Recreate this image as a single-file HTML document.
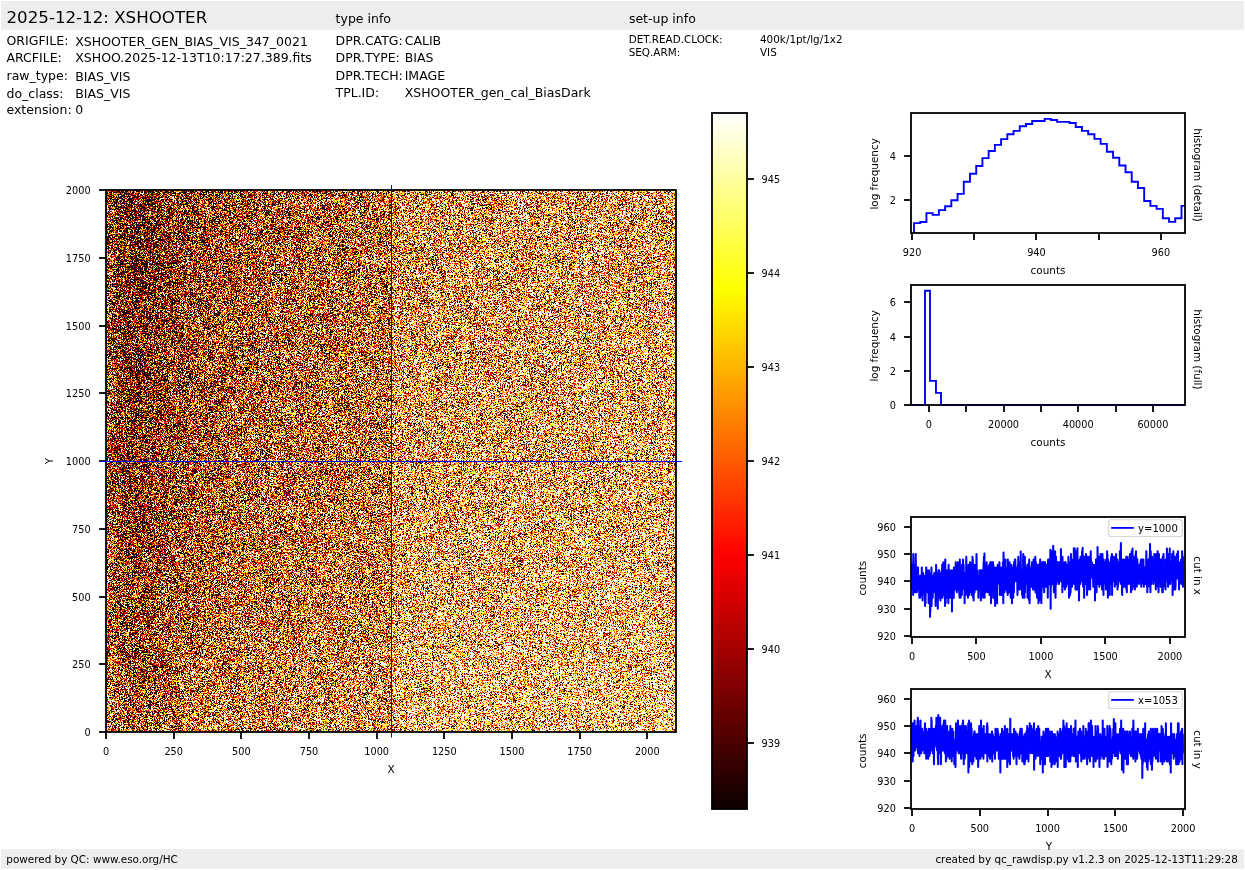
<!DOCTYPE html>
<html><head><meta charset="utf-8"><title>XSHOOTER BIAS_VIS raw display</title>
<style>html,body{margin:0;padding:0;background:#fff}svg{display:block;will-change:transform}text{white-space:pre}</style></head>
<body>
<svg width="1245" height="870" viewBox="0 0 1245 870" font-family="'DejaVu Sans','Liberation Sans',sans-serif" fill="#000">
<rect x="1" y="1" width="1243" height="28.7" fill="#ededed"/>
<rect x="1" y="849.1" width="1243" height="19.5" fill="#ededed"/>
<text x="6.5" y="23.2" font-size="16.67" text-anchor="start">2025-12-12: XSHOOTER</text>
<text x="335.6" y="22.6" font-size="12.5" text-anchor="start">type info</text>
<text x="628.9" y="22.6" font-size="12.5" text-anchor="start">set-up info</text>
<text x="6.5" y="44.5" font-size="12.5" text-anchor="start">ORIGFILE:</text>
<text x="75.3" y="45.7" font-size="12.5" text-anchor="start">XSHOOTER_GEN_BIAS_VIS_347_0021</text>
<text x="6.5" y="61.6" font-size="12.5" text-anchor="start">ARCFILE:</text>
<text x="75.3" y="61.9" font-size="12.5" text-anchor="start">XSHOO.2025-12-13T10:17:27.389.fits</text>
<text x="6.5" y="79.9" font-size="12.5" text-anchor="start">raw_type:</text>
<text x="75.3" y="80.5" font-size="12.5" text-anchor="start">BIAS_VIS</text>
<text x="6.5" y="97.5" font-size="12.5" text-anchor="start">do_class:</text>
<text x="75.3" y="97.5" font-size="12.5" text-anchor="start">BIAS_VIS</text>
<text x="6.5" y="113.6" font-size="12.5" text-anchor="start">extension:</text>
<text x="75.3" y="113.6" font-size="12.5" text-anchor="start">0</text>
<text x="335.5" y="44.8" font-size="12.5" text-anchor="start">DPR.CATG:</text>
<text x="404.7" y="44.8" font-size="12.5" text-anchor="start">CALIB</text>
<text x="335.5" y="61.7" font-size="12.5" text-anchor="start">DPR.TYPE:</text>
<text x="404.7" y="61.7" font-size="12.5" text-anchor="start">BIAS</text>
<text x="335.5" y="79.7" font-size="12.5" text-anchor="start">DPR.TECH:</text>
<text x="404.7" y="79.7" font-size="12.5" text-anchor="start">IMAGE</text>
<text x="335.5" y="97.2" font-size="12.5" text-anchor="start">TPL.ID:</text>
<text x="404.7" y="97.2" font-size="12.5" text-anchor="start">XSHOOTER_gen_cal_BiasDark</text>
<text x="628.7" y="42.6" font-size="10.42" text-anchor="start">DET.READ.CLOCK:</text>
<text x="760" y="42.6" font-size="10.42" text-anchor="start">400k/1pt/lg/1x2</text>
<text x="628.7" y="55.5" font-size="10.42" text-anchor="start">SEQ.ARM:</text>
<text x="760" y="55.5" font-size="10.42" text-anchor="start">VIS</text>
<text x="6.3" y="863.4" font-size="10.42" text-anchor="start">powered by QC: www.eso.org/HC</text>
<text x="1237.8" y="863.4" font-size="10.42" text-anchor="end">created by qc_rawdisp.py v1.2.3 on 2025-12-13T11:29:28</text>
<defs><linearGradient id="mu" x1="0" y1="0" x2="1" y2="0"><stop offset="0.00000" stop-color="rgb(112,0,0)"/><stop offset="0.42735" stop-color="rgb(115,0,0)"/><stop offset="0.49976" stop-color="rgb(117,0,0)"/><stop offset="0.50024" stop-color="rgb(153,0,0)"/><stop offset="0.71225" stop-color="rgb(161,0,0)"/><stop offset="1.00000" stop-color="rgb(168,0,0)"/></linearGradient>
<linearGradient id="band" x1="0" y1="0" x2="1" y2="0"><stop offset="0.0000" stop-color="#000" stop-opacity="0.202"/><stop offset="0.0095" stop-color="#000" stop-opacity="0.379"/><stop offset="0.0214" stop-color="#000" stop-opacity="0.632"/><stop offset="0.0380" stop-color="#000" stop-opacity="0.771"/><stop offset="0.0546" stop-color="#000" stop-opacity="0.784"/><stop offset="0.0760" stop-color="#000" stop-opacity="0.696"/><stop offset="0.1045" stop-color="#000" stop-opacity="0.546"/><stop offset="0.1425" stop-color="#000" stop-opacity="0.397"/><stop offset="0.1899" stop-color="#000" stop-opacity="0.274"/><stop offset="0.2469" stop-color="#000" stop-opacity="0.176"/><stop offset="0.3324" stop-color="#000" stop-opacity="0.094"/><stop offset="0.4274" stop-color="#000" stop-opacity="0.025"/><stop offset="0.4748" stop-color="#000" stop-opacity="0.000"/><stop offset="1.0000" stop-color="#000" stop-opacity="0.000"/></linearGradient>
<linearGradient id="bm" x1="0" y1="0" x2="0" y2="1"><stop offset="0" stop-color="#fff"/><stop offset="0.5" stop-color="#e6e6e6"/><stop offset="0.75" stop-color="#cccccc"/><stop offset="1" stop-color="#a6a6a6"/></linearGradient>
<mask id="bmask" maskUnits="userSpaceOnUse" x="0" y="0" width="1245" height="870"><rect x="105" y="190" width="572" height="542" fill="url(#bm)"/></mask>
<linearGradient id="muy" x1="0" y1="0" x2="0" y2="1"><stop offset="0.0000" stop-color="rgb(0,0,0)"/><stop offset="0.2500" stop-color="rgb(0,8,0)"/><stop offset="0.5000" stop-color="rgb(0,15,0)"/><stop offset="0.7500" stop-color="rgb(0,26,0)"/><stop offset="0.8750" stop-color="rgb(0,36,0)"/><stop offset="1.0000" stop-color="rgb(0,43,0)"/></linearGradient>
<clipPath id="imclip"><rect x="106" y="190" width="570" height="542"/></clipPath>
<filter id="nz" filterUnits="userSpaceOnUse" x="96" y="180" width="590" height="562" color-interpolation-filters="sRGB">
<feTurbulence type="fractalNoise" baseFrequency="2.7 3.3" numOctaves="1" seed="3" result="t0"/><feColorMatrix type="matrix" values="1 1 1 0 -1  1 1 1 0 -1  1 1 1 0 -1  0 0 0 0 1" in="t0" result="m0"/><feOffset in="m0" dx="0" dy="0" result="l0"/><feTurbulence type="fractalNoise" baseFrequency="2.7 3.3" numOctaves="1" seed="11" result="t1"/><feColorMatrix type="matrix" values="1 1 1 0 -1  1 1 1 0 -1  1 1 1 0 -1  0 0 0 0 1" in="t1" result="m1"/><feOffset in="m1" dx="5" dy="5" result="l1"/><feTurbulence type="fractalNoise" baseFrequency="2.7 3.3" numOctaves="1" seed="23" result="t2"/><feColorMatrix type="matrix" values="1 1 1 0 -1  1 1 1 0 -1  1 1 1 0 -1  0 0 0 0 1" in="t2" result="m2"/><feOffset in="m2" dx="5" dy="0" result="l2"/><feTurbulence type="fractalNoise" baseFrequency="2.7 3.3" numOctaves="1" seed="37" result="t3"/><feColorMatrix type="matrix" values="1 1 1 0 -1  1 1 1 0 -1  1 1 1 0 -1  0 0 0 0 1" in="t3" result="m3"/><feOffset in="m3" dx="0" dy="5" result="l3"/><feComposite in="l0" in2="l1" operator="arithmetic" k1="0" k2="0.5" k3="0.5" k4="0" result="ab"/><feComposite in="l2" in2="l3" operator="arithmetic" k1="0" k2="0.5" k3="0.5" k4="0" result="cd"/><feComposite in="ab" in2="cd" operator="arithmetic" k1="0" k2="1" k3="1" k4="-0.5" result="g"/><feColorMatrix in="SourceGraphic" type="matrix" values="1 1 0 0 0  1 1 0 0 0  1 1 0 0 0  0 0 0 0 1" result="mu"/><feComposite in="g" in2="mu" operator="arithmetic" k1="0" k2="2.73" k3="1" k4="-1.36" result="v"/><feComponentTransfer in="v"><feFuncR type="table" tableValues="0.042 0.062 0.083 0.103 0.124 0.145 0.165 0.186 0.206 0.227 0.247 0.268 0.289 0.309 0.330 0.350 0.371 0.392 0.412 0.433 0.453 0.474 0.495 0.515 0.536 0.556 0.577 0.598 0.618 0.639 0.659 0.680 0.700 0.721 0.742 0.762 0.783 0.803 0.824 0.845 0.865 0.886 0.906 0.927 0.948 0.968 0.989 1.000 1.000 1.000 1.000 1.000 1.000 1.000 1.000 1.000 1.000 1.000 1.000 1.000 1.000 1.000 1.000 1.000 1.000 1.000 1.000 1.000 1.000 1.000 1.000 1.000 1.000 1.000 1.000 1.000 1.000 1.000 1.000 1.000 1.000 1.000 1.000 1.000 1.000 1.000 1.000 1.000 1.000 1.000 1.000 1.000 1.000 1.000 1.000 1.000 1.000 1.000 1.000 1.000 1.000 1.000 1.000 1.000 1.000 1.000 1.000 1.000 1.000 1.000 1.000 1.000 1.000 1.000 1.000 1.000 1.000 1.000 1.000 1.000 1.000 1.000 1.000 1.000 1.000 1.000 1.000 1.000 1.000"/><feFuncG type="table" tableValues="0.000 0.000 0.000 0.000 0.000 0.000 0.000 0.000 0.000 0.000 0.000 0.000 0.000 0.000 0.000 0.000 0.000 0.000 0.000 0.000 0.000 0.000 0.000 0.000 0.000 0.000 0.000 0.000 0.000 0.000 0.000 0.000 0.000 0.000 0.000 0.000 0.000 0.000 0.000 0.000 0.000 0.000 0.000 0.000 0.000 0.000 0.000 0.009 0.030 0.050 0.071 0.092 0.112 0.133 0.153 0.174 0.195 0.215 0.236 0.256 0.277 0.298 0.318 0.339 0.359 0.380 0.400 0.421 0.442 0.462 0.483 0.503 0.524 0.545 0.565 0.586 0.606 0.627 0.648 0.668 0.689 0.709 0.730 0.750 0.771 0.792 0.812 0.833 0.853 0.874 0.895 0.915 0.936 0.956 0.977 0.998 1.000 1.000 1.000 1.000 1.000 1.000 1.000 1.000 1.000 1.000 1.000 1.000 1.000 1.000 1.000 1.000 1.000 1.000 1.000 1.000 1.000 1.000 1.000 1.000 1.000 1.000 1.000 1.000 1.000 1.000 1.000 1.000 1.000"/><feFuncB type="table" tableValues="0.000 0.000 0.000 0.000 0.000 0.000 0.000 0.000 0.000 0.000 0.000 0.000 0.000 0.000 0.000 0.000 0.000 0.000 0.000 0.000 0.000 0.000 0.000 0.000 0.000 0.000 0.000 0.000 0.000 0.000 0.000 0.000 0.000 0.000 0.000 0.000 0.000 0.000 0.000 0.000 0.000 0.000 0.000 0.000 0.000 0.000 0.000 0.000 0.000 0.000 0.000 0.000 0.000 0.000 0.000 0.000 0.000 0.000 0.000 0.000 0.000 0.000 0.000 0.000 0.000 0.000 0.000 0.000 0.000 0.000 0.000 0.000 0.000 0.000 0.000 0.000 0.000 0.000 0.000 0.000 0.000 0.000 0.000 0.000 0.000 0.000 0.000 0.000 0.000 0.000 0.000 0.000 0.000 0.000 0.000 0.000 0.027 0.058 0.089 0.120 0.151 0.182 0.212 0.243 0.274 0.305 0.336 0.367 0.398 0.429 0.460 0.490 0.521 0.552 0.583 0.614 0.645 0.676 0.707 0.737 0.768 0.799 0.830 0.861 0.892 0.923 0.954 0.985 1.000"/></feComponentTransfer></filter></defs>
<g filter="url(#nz)" clip-path="url(#imclip)"><rect x="106" y="190" width="570" height="542" fill="url(#mu)"/><rect x="106" y="190" width="570" height="542" fill="url(#band)" mask="url(#bmask)"/><rect x="106" y="190" width="570" height="542" fill="url(#muy)" style="mix-blend-mode:screen"/></g>
<rect x="106" y="190" width="570" height="542" fill="none" stroke="#000" stroke-width="1.8"/>
<line x1="106" y1="732" x2="106" y2="738.94" stroke="#000" stroke-width="1.8"/>
<text x="106" y="755" font-size="9.72" text-anchor="middle">0</text>
<line x1="106" y1="732" x2="99.06" y2="732" stroke="#000" stroke-width="1.8"/>
<text x="90.6" y="736" font-size="9.72" text-anchor="end">0</text>
<line x1="174" y1="732" x2="174" y2="738.94" stroke="#000" stroke-width="1.8"/>
<text x="173.66" y="755" font-size="9.72" text-anchor="middle">250</text>
<line x1="106" y1="664" x2="99.06" y2="664" stroke="#000" stroke-width="1.8"/>
<text x="90.6" y="668" font-size="9.72" text-anchor="end">250</text>
<line x1="241" y1="732" x2="241" y2="738.94" stroke="#000" stroke-width="1.8"/>
<text x="241.33" y="755" font-size="9.72" text-anchor="middle">500</text>
<line x1="106" y1="597" x2="99.06" y2="597" stroke="#000" stroke-width="1.8"/>
<text x="90.6" y="601" font-size="9.72" text-anchor="end">500</text>
<line x1="309" y1="732" x2="309" y2="738.94" stroke="#000" stroke-width="1.8"/>
<text x="308.99" y="755" font-size="9.72" text-anchor="middle">750</text>
<line x1="106" y1="529" x2="99.06" y2="529" stroke="#000" stroke-width="1.8"/>
<text x="90.6" y="533" font-size="9.72" text-anchor="end">750</text>
<line x1="377" y1="732" x2="377" y2="738.94" stroke="#000" stroke-width="1.8"/>
<text x="376.66" y="755" font-size="9.72" text-anchor="middle">1000</text>
<line x1="106" y1="461" x2="99.06" y2="461" stroke="#000" stroke-width="1.8"/>
<text x="90.6" y="465" font-size="9.72" text-anchor="end">1000</text>
<line x1="444" y1="732" x2="444" y2="738.94" stroke="#000" stroke-width="1.8"/>
<text x="444.32" y="755" font-size="9.72" text-anchor="middle">1250</text>
<line x1="106" y1="393" x2="99.06" y2="393" stroke="#000" stroke-width="1.8"/>
<text x="90.6" y="397" font-size="9.72" text-anchor="end">1250</text>
<line x1="512" y1="732" x2="512" y2="738.94" stroke="#000" stroke-width="1.8"/>
<text x="511.98" y="755" font-size="9.72" text-anchor="middle">1500</text>
<line x1="106" y1="326" x2="99.06" y2="326" stroke="#000" stroke-width="1.8"/>
<text x="90.6" y="330" font-size="9.72" text-anchor="end">1500</text>
<line x1="580" y1="732" x2="580" y2="738.94" stroke="#000" stroke-width="1.8"/>
<text x="579.65" y="755" font-size="9.72" text-anchor="middle">1750</text>
<line x1="106" y1="258" x2="99.06" y2="258" stroke="#000" stroke-width="1.8"/>
<text x="90.6" y="262" font-size="9.72" text-anchor="end">1750</text>
<line x1="647" y1="732" x2="647" y2="738.94" stroke="#000" stroke-width="1.8"/>
<text x="647.31" y="755" font-size="9.72" text-anchor="middle">2000</text>
<line x1="106" y1="190" x2="99.06" y2="190" stroke="#000" stroke-width="1.8"/>
<text x="90.6" y="194" font-size="9.72" text-anchor="end">2000</text>
<text x="391" y="773" font-size="10.42" text-anchor="middle">X</text>
<text x="52.9" y="461" font-size="10.42" text-anchor="middle" transform="rotate(-90 52.9 461)">Y</text>
<line x1="391.5" y1="185" x2="391.5" y2="737.5" stroke="#0000ff" stroke-width="1.0"/>
<line x1="100" y1="461.5" x2="682" y2="461.5" stroke="#0000ff" stroke-width="1.0"/>
<defs><linearGradient id="hot" x1="0" y1="1" x2="0" y2="0"><stop offset="0" stop-color="rgb(11,0,0)"/><stop offset="0.365079" stop-color="rgb(255,0,0)"/><stop offset="0.746032" stop-color="rgb(255,255,0)"/><stop offset="1" stop-color="rgb(255,255,255)"/></linearGradient></defs>
<rect x="712" y="113" width="35" height="696" fill="url(#hot)"/>
<rect x="712" y="113" width="35" height="696" fill="none" stroke="#000" stroke-width="1.8"/>
<line x1="747" y1="743" x2="753.94" y2="743" stroke="#000" stroke-width="1.8"/>
<text x="761.6" y="747" font-size="9.72" text-anchor="start">939</text>
<line x1="747" y1="649" x2="753.94" y2="649" stroke="#000" stroke-width="1.8"/>
<text x="761.6" y="653" font-size="9.72" text-anchor="start">940</text>
<line x1="747" y1="555" x2="753.94" y2="555" stroke="#000" stroke-width="1.8"/>
<text x="761.6" y="559" font-size="9.72" text-anchor="start">941</text>
<line x1="747" y1="461" x2="753.94" y2="461" stroke="#000" stroke-width="1.8"/>
<text x="761.6" y="465" font-size="9.72" text-anchor="start">942</text>
<line x1="747" y1="367" x2="753.94" y2="367" stroke="#000" stroke-width="1.8"/>
<text x="761.6" y="371" font-size="9.72" text-anchor="start">943</text>
<line x1="747" y1="273" x2="753.94" y2="273" stroke="#000" stroke-width="1.8"/>
<text x="761.6" y="277" font-size="9.72" text-anchor="start">944</text>
<line x1="747" y1="179" x2="753.94" y2="179" stroke="#000" stroke-width="1.8"/>
<text x="761.6" y="183" font-size="9.72" text-anchor="start">945</text>
<path d="M914 233 V223.1 H920.22 V222.05 H926.44 V213.1 H932.66 V214.9 H938.88 V210.1 H945.11 V206.2 H951.33 V200.2 H957.55 V193.9 H963.77 V181.7 H969.99 V173.8 H976.21 V166 H982.43 V158.1 H988.65 V151 H994.87 V144.9 H1001.09 V139.1 H1007.32 V134.2 H1013.54 V130.9 H1019.76 V126.2 H1025.98 V124 H1032.2 V121 H1038.42 V121 H1044.64 V118.9 H1050.86 V120 H1057.08 V121.9 H1063.3 V121.9 H1069.53 V122.95 H1075.75 V127 H1081.97 V130.9 H1088.19 V134.2 H1094.41 V138.9 H1100.63 V143.9 H1106.85 V151.8 H1113.07 V157.8 H1119.29 V165.5 H1125.51 V172.3 H1131.74 V181.7 H1137.96 V188 H1144.18 V201 H1150.4 V205.9 H1156.62 V208.9 H1162.84 V218.2 H1169.06 V221.9 H1175.28 V218.2 H1181.5 V205.9 H1185" fill="none" stroke="#0000ff" stroke-width="1.9" stroke-linejoin="miter"/>
<rect x="911" y="113" width="274" height="120" fill="none" stroke="#000" stroke-width="1.8"/>
<line x1="912" y1="233" x2="912" y2="239.94" stroke="#000" stroke-width="1.8"/>
<text x="912.05" y="256" font-size="9.72" text-anchor="middle">920</text>
<line x1="974" y1="233" x2="974" y2="239.94" stroke="#000" stroke-width="1.8"/>
<line x1="1036" y1="233" x2="1036" y2="239.94" stroke="#000" stroke-width="1.8"/>
<text x="1036.47" y="256" font-size="9.72" text-anchor="middle">940</text>
<line x1="1099" y1="233" x2="1099" y2="239.94" stroke="#000" stroke-width="1.8"/>
<line x1="1161" y1="233" x2="1161" y2="239.94" stroke="#000" stroke-width="1.8"/>
<text x="1160.89" y="256" font-size="9.72" text-anchor="middle">960</text>
<line x1="911" y1="200" x2="904.06" y2="200" stroke="#000" stroke-width="1.8"/>
<text x="895.9" y="204" font-size="9.72" text-anchor="end">2</text>
<line x1="911" y1="156" x2="904.06" y2="156" stroke="#000" stroke-width="1.8"/>
<text x="895.9" y="160" font-size="9.72" text-anchor="end">4</text>
<text x="1048" y="274" font-size="10.42" text-anchor="middle">counts</text>
<text x="877.7" y="173.85" font-size="10.42" text-anchor="middle" transform="rotate(-90 877.7 173.85)">log frequency</text>
<text x="1193.9" y="175.1" font-size="10.42" text-anchor="middle" transform="rotate(90 1193.9 175.1)">histogram (detail)</text>
<path d="M925 405 V290.8 H930 V380.9 H935.96 V392.9 H941 V405" fill="none" stroke="#0000ff" stroke-width="1.9"/>
<rect x="911" y="285" width="274" height="120" fill="none" stroke="#000" stroke-width="1.8"/>
<line x1="929" y1="405" x2="929" y2="411.94" stroke="#000" stroke-width="1.8"/>
<text x="928.9" y="428" font-size="9.72" text-anchor="middle">0</text>
<line x1="966" y1="405" x2="966" y2="411.94" stroke="#000" stroke-width="1.8"/>
<line x1="1004" y1="405" x2="1004" y2="411.94" stroke="#000" stroke-width="1.8"/>
<text x="1003.56" y="428" font-size="9.72" text-anchor="middle">20000</text>
<line x1="1041" y1="405" x2="1041" y2="411.94" stroke="#000" stroke-width="1.8"/>
<line x1="1078" y1="405" x2="1078" y2="411.94" stroke="#000" stroke-width="1.8"/>
<text x="1078.22" y="428" font-size="9.72" text-anchor="middle">40000</text>
<line x1="1116" y1="405" x2="1116" y2="411.94" stroke="#000" stroke-width="1.8"/>
<line x1="1153" y1="405" x2="1153" y2="411.94" stroke="#000" stroke-width="1.8"/>
<text x="1152.88" y="428" font-size="9.72" text-anchor="middle">60000</text>
<line x1="911" y1="405" x2="904.06" y2="405" stroke="#000" stroke-width="1.8"/>
<text x="895.9" y="409" font-size="9.72" text-anchor="end">0</text>
<line x1="911" y1="371" x2="904.06" y2="371" stroke="#000" stroke-width="1.8"/>
<text x="895.9" y="375" font-size="9.72" text-anchor="end">2</text>
<line x1="911" y1="337" x2="904.06" y2="337" stroke="#000" stroke-width="1.8"/>
<text x="895.9" y="341" font-size="9.72" text-anchor="end">4</text>
<line x1="911" y1="302" x2="904.06" y2="302" stroke="#000" stroke-width="1.8"/>
<text x="895.9" y="306" font-size="9.72" text-anchor="end">6</text>
<text x="1048" y="446" font-size="10.42" text-anchor="middle">counts</text>
<text x="877.7" y="345.85" font-size="10.42" text-anchor="middle" transform="rotate(-90 877.7 345.85)">log frequency</text>
<text x="1193.9" y="349.4" font-size="10.42" text-anchor="middle" transform="rotate(90 1193.9 349.4)">histogram (full)</text>
<line x1="911.7" y1="405" x2="924.1" y2="405" stroke="#000036" stroke-width="1.8"/>
<line x1="941.9" y1="405" x2="1184.3" y2="405" stroke="#000036" stroke-width="1.8"/>
<path d="M912 589.5 912.13 564.89 912.26 584.03 912.39 578.57 912.52 575.83 912.64 584.03 912.77 589.5 912.9 570.36 913.03 573.1 913.16 594.98 913.29 553.95 913.42 567.62 913.55 584.03 913.68 567.62 913.81 581.3 913.93 578.57 914.06 570.36 914.19 589.5 914.32 573.1 914.45 564.89 914.58 564.89 914.71 581.3 914.84 570.36 914.97 592.24 915.09 578.57 915.22 573.1 915.35 592.24 915.48 578.57 915.61 562.15 915.74 553.95 915.87 570.36 916 570.36 916.13 586.77 916.26 589.5 916.38 592.24 916.51 573.1 916.64 573.1 916.77 586.77 916.9 592.24 917.03 575.83 917.16 575.83 917.29 581.3 917.42 567.62 917.54 581.3 917.67 581.3 917.8 589.5 917.93 578.57 918.06 567.62 918.19 578.57 918.32 578.57 918.45 575.83 918.58 578.57 918.71 575.83 918.83 575.83 918.96 575.83 919.09 589.5 919.22 578.57 919.35 597.71 919.48 578.57 919.61 594.98 919.74 581.3 919.87 578.57 919.99 586.77 920.12 581.3 920.25 597.71 920.38 589.5 920.51 575.83 920.64 592.24 920.77 575.83 920.9 594.98 921.03 592.24 921.16 592.24 921.28 584.03 921.41 578.57 921.54 592.24 921.67 584.03 921.8 567.62 921.93 586.77 922.06 592.24 922.19 578.57 922.32 586.77 922.44 589.5 922.57 600.45 922.7 575.83 922.83 589.5 922.96 584.03 923.09 594.98 923.22 573.1 923.35 578.57 923.48 575.83 923.61 586.77 923.73 581.3 923.86 575.83 923.99 575.83 924.12 581.3 924.25 586.77 924.38 589.5 924.51 592.24 924.64 594.98 924.77 581.3 924.89 586.77 925.02 605.91 925.15 586.77 925.28 575.83 925.41 589.5 925.54 603.18 925.67 586.77 925.8 578.57 925.93 584.03 926.06 589.5 926.18 567.62 926.31 567.62 926.44 586.77 926.57 578.57 926.7 581.3 926.83 578.57 926.96 570.36 927.09 578.57 927.22 584.03 927.35 592.24 927.47 592.24 927.6 586.77 927.73 575.83 927.86 584.03 927.99 584.03 928.12 584.03 928.25 584.03 928.38 581.3 928.51 594.98 928.63 603.18 928.76 589.5 928.89 597.71 929.02 570.36 929.15 586.77 929.28 586.77 929.41 600.45 929.54 584.03 929.67 592.24 929.8 575.83 929.92 578.57 930.05 616.86 930.18 581.3 930.31 611.38 930.44 592.24 930.57 573.1 930.7 578.57 930.83 584.03 930.96 586.77 931.08 600.45 931.21 597.71 931.34 584.03 931.47 567.62 931.6 605.91 931.73 578.57 931.86 578.57 931.99 575.83 932.12 594.98 932.25 589.5 932.37 584.03 932.5 594.98 932.63 597.71 932.76 594.98 932.89 586.77 933.02 581.3 933.15 586.77 933.28 584.03 933.41 592.24 933.53 592.24 933.66 575.83 933.79 586.77 933.92 586.77 934.05 575.83 934.18 573.1 934.31 573.1 934.44 581.3 934.57 586.77 934.7 581.3 934.82 584.03 934.95 573.1 935.08 581.3 935.21 578.57 935.34 586.77 935.47 573.1 935.6 605.91 935.73 581.3 935.86 578.57 935.98 597.71 936.11 564.89 936.24 586.77 936.37 586.77 936.5 594.98 936.63 575.83 936.76 584.03 936.89 592.24 937.02 584.03 937.15 578.57 937.27 573.1 937.4 584.03 937.53 594.98 937.66 589.5 937.79 608.65 937.92 592.24 938.05 578.57 938.18 581.3 938.31 586.77 938.43 589.5 938.56 570.36 938.69 581.3 938.82 575.83 938.95 581.3 939.08 592.24 939.21 570.36 939.34 597.71 939.47 597.71 939.6 589.5 939.72 592.24 939.85 589.5 939.98 592.24 940.11 575.83 940.24 584.03 940.37 581.3 940.5 600.45 940.63 592.24 940.76 575.83 940.88 597.71 941.01 573.1 941.14 594.98 941.27 581.3 941.4 592.24 941.53 584.03 941.66 594.98 941.79 586.77 941.92 570.36 942.05 589.5 942.17 564.89 942.3 589.5 942.43 597.71 942.56 584.03 942.69 589.5 942.82 567.62 942.95 575.83 943.08 573.1 943.21 578.57 943.33 562.15 943.46 578.57 943.59 581.3 943.72 592.24 943.85 594.98 943.98 584.03 944.11 575.83 944.24 573.1 944.37 594.98 944.5 578.57 944.62 584.03 944.75 594.98 944.88 578.57 945.01 605.91 945.14 581.3 945.27 559.42 945.4 594.98 945.53 584.03 945.66 603.18 945.78 592.24 945.91 575.83 946.04 594.98 946.17 584.03 946.3 586.77 946.43 586.77 946.56 581.3 946.69 578.57 946.82 573.1 946.95 575.83 947.07 589.5 947.2 570.36 947.33 570.36 947.46 597.71 947.59 575.83 947.72 575.83 947.85 573.1 947.98 578.57 948.11 594.98 948.23 586.77 948.36 603.18 948.49 584.03 948.62 564.89 948.75 575.83 948.88 575.83 949.01 586.77 949.14 592.24 949.27 592.24 949.4 581.3 949.52 589.5 949.65 589.5 949.78 570.36 949.91 597.71 950.04 594.98 950.17 586.77 950.3 584.03 950.43 584.03 950.56 594.98 950.68 581.3 950.81 584.03 950.94 578.57 951.07 592.24 951.2 578.57 951.33 581.3 951.46 589.5 951.59 584.03 951.72 586.77 951.85 570.36 951.97 611.38 952.1 594.98 952.23 597.71 952.36 586.77 952.49 589.5 952.62 586.77 952.75 575.83 952.88 597.71 953.01 589.5 953.14 584.03 953.26 592.24 953.39 578.57 953.52 578.57 953.65 589.5 953.78 597.71 953.91 567.62 954.04 578.57 954.17 578.57 954.3 581.3 954.42 581.3 954.55 573.1 954.68 581.3 954.81 586.77 954.94 575.83 955.07 581.3 955.2 589.5 955.33 589.5 955.46 570.36 955.59 575.83 955.71 562.15 955.84 586.77 955.97 589.5 956.1 578.57 956.23 567.62 956.36 575.83 956.49 578.57 956.62 564.89 956.75 589.5 956.87 592.24 957 589.5 957.13 584.03 957.26 578.57 957.39 573.1 957.52 578.57 957.65 567.62 957.78 589.5 957.91 562.15 958.04 589.5 958.16 570.36 958.29 589.5 958.42 578.57 958.55 581.3 958.68 575.83 958.81 573.1 958.94 584.03 959.07 581.3 959.2 578.57 959.32 594.98 959.45 589.5 959.58 597.71 959.71 581.3 959.84 559.42 959.97 573.1 960.1 589.5 960.23 586.77 960.36 573.1 960.49 586.77 960.61 597.71 960.74 592.24 960.87 592.24 961 592.24 961.13 575.83 961.26 581.3 961.39 594.98 961.52 586.77 961.65 592.24 961.77 592.24 961.9 594.98 962.03 564.89 962.16 584.03 962.29 575.83 962.42 573.1 962.55 584.03 962.68 575.83 962.81 575.83 962.94 578.57 963.06 559.42 963.19 578.57 963.32 584.03 963.45 575.83 963.58 564.89 963.71 570.36 963.84 586.77 963.97 589.5 964.1 589.5 964.22 586.77 964.35 578.57 964.48 573.1 964.61 603.18 964.74 581.3 964.87 592.24 965 573.1 965.13 573.1 965.26 589.5 965.39 584.03 965.51 589.5 965.64 575.83 965.77 594.98 965.9 592.24 966.03 586.77 966.16 570.36 966.29 556.68 966.42 581.3 966.55 592.24 966.67 581.3 966.8 589.5 966.93 575.83 967.06 592.24 967.19 584.03 967.32 581.3 967.45 575.83 967.58 581.3 967.71 567.62 967.84 578.57 967.96 597.71 968.09 573.1 968.22 584.03 968.35 586.77 968.48 564.89 968.61 589.5 968.74 578.57 968.87 586.77 969 567.62 969.12 584.03 969.25 578.57 969.38 594.98 969.51 567.62 969.64 589.5 969.77 573.1 969.9 570.36 970.03 567.62 970.16 562.15 970.29 592.24 970.41 575.83 970.54 578.57 970.67 575.83 970.8 570.36 970.93 578.57 971.06 589.5 971.19 581.3 971.32 564.89 971.45 592.24 971.57 578.57 971.7 589.5 971.83 570.36 971.96 594.98 972.09 584.03 972.22 581.3 972.35 578.57 972.48 556.68 972.61 564.89 972.74 589.5 972.86 559.42 972.99 592.24 973.12 597.71 973.25 594.98 973.38 578.57 973.51 575.83 973.64 600.45 973.77 575.83 973.9 584.03 974.02 573.1 974.15 584.03 974.28 570.36 974.41 575.83 974.54 592.24 974.67 564.89 974.8 578.57 974.93 573.1 975.06 567.62 975.19 589.5 975.31 581.3 975.44 586.77 975.57 589.5 975.7 578.57 975.83 575.83 975.96 567.62 976.09 567.62 976.22 581.3 976.35 586.77 976.48 553.95 976.6 559.42 976.73 581.3 976.86 589.5 976.99 584.03 977.12 578.57 977.25 570.36 977.38 570.36 977.51 575.83 977.64 581.3 977.76 578.57 977.89 584.03 978.02 578.57 978.15 581.3 978.28 575.83 978.41 597.71 978.54 584.03 978.67 581.3 978.8 589.5 978.93 581.3 979.05 589.5 979.18 586.77 979.31 581.3 979.44 581.3 979.57 584.03 979.7 570.36 979.83 578.57 979.96 575.83 980.09 578.57 980.21 586.77 980.34 589.5 980.47 570.36 980.6 584.03 980.73 597.71 980.86 600.45 980.99 578.57 981.12 586.77 981.25 581.3 981.38 584.03 981.5 584.03 981.63 581.3 981.76 592.24 981.89 578.57 982.02 570.36 982.15 573.1 982.28 594.98 982.41 592.24 982.54 592.24 982.66 581.3 982.79 570.36 982.92 575.83 983.05 597.71 983.18 578.57 983.31 573.1 983.44 584.03 983.57 562.15 983.7 586.77 983.83 567.62 983.95 556.68 984.08 592.24 984.21 581.3 984.34 573.1 984.47 553.53 984.6 597.71 984.73 573.1 984.86 575.83 984.99 584.03 985.11 586.77 985.24 584.03 985.37 581.3 985.5 592.24 985.63 564.89 985.76 589.5 985.89 584.03 986.02 586.77 986.15 584.03 986.28 578.57 986.4 586.77 986.53 581.3 986.66 562.15 986.79 570.36 986.92 581.3 987.05 570.36 987.18 586.77 987.31 575.83 987.44 592.24 987.56 589.5 987.69 586.77 987.82 567.62 987.95 575.83 988.08 573.1 988.21 578.57 988.34 575.83 988.47 575.83 988.6 573.1 988.73 578.57 988.85 586.77 988.98 586.77 989.11 567.62 989.24 564.89 989.37 573.1 989.5 594.98 989.63 564.89 989.76 575.83 989.89 581.3 990.01 578.57 990.14 584.03 990.27 562.15 990.4 562.15 990.53 589.5 990.66 581.3 990.79 575.83 990.92 567.62 991.05 603.18 991.18 570.36 991.3 562.15 991.43 581.3 991.56 578.57 991.69 567.62 991.82 575.83 991.95 592.24 992.08 589.5 992.21 589.5 992.34 592.24 992.46 578.57 992.59 584.03 992.72 578.57 992.85 573.1 992.98 562.15 993.11 575.83 993.24 597.71 993.37 564.89 993.5 581.3 993.63 567.62 993.75 584.03 993.88 575.83 994.01 581.3 994.14 578.57 994.27 567.62 994.4 586.77 994.53 578.57 994.66 575.83 994.79 584.03 994.91 600.45 995.04 575.83 995.17 605.91 995.3 592.24 995.43 584.03 995.56 575.83 995.69 570.36 995.82 570.36 995.95 573.1 996.08 581.3 996.2 567.62 996.33 581.3 996.46 567.62 996.59 600.45 996.72 589.5 996.85 584.03 996.98 578.57 997.11 603.18 997.24 570.36 997.36 570.36 997.49 570.36 997.62 584.03 997.75 564.89 997.88 584.03 998.01 570.36 998.14 578.57 998.27 578.57 998.4 581.3 998.53 578.57 998.65 567.62 998.78 564.89 998.91 564.89 999.04 570.36 999.17 573.1 999.3 575.83 999.43 562.15 999.56 584.03 999.69 584.03 999.81 578.57 999.94 594.98 1000.07 581.3 1000.2 578.57 1000.33 589.5 1000.46 584.03 1000.59 573.1 1000.72 581.3 1000.85 578.57 1000.98 567.62 1001.1 584.03 1001.23 589.5 1001.36 578.57 1001.49 575.83 1001.62 594.98 1001.75 573.1 1001.88 581.3 1002.01 584.03 1002.14 586.77 1002.26 581.3 1002.39 570.36 1002.52 573.1 1002.65 570.36 1002.78 581.3 1002.91 562.15 1003.04 567.62 1003.17 578.57 1003.3 603.18 1003.43 578.57 1003.55 552.51 1003.68 578.57 1003.81 589.5 1003.94 562.15 1004.07 584.03 1004.2 573.1 1004.33 570.36 1004.46 592.24 1004.59 578.57 1004.72 567.62 1004.84 581.3 1004.97 573.1 1005.1 578.57 1005.23 567.62 1005.36 559.42 1005.49 589.5 1005.62 581.3 1005.75 575.83 1005.88 584.03 1006 586.77 1006.13 581.3 1006.26 581.3 1006.39 584.03 1006.52 575.83 1006.65 570.36 1006.78 570.36 1006.91 573.1 1007.04 567.62 1007.17 592.24 1007.29 578.57 1007.42 575.83 1007.55 573.1 1007.68 594.98 1007.81 559.42 1007.94 586.77 1008.07 575.83 1008.2 570.36 1008.33 567.62 1008.45 584.03 1008.58 584.03 1008.71 575.83 1008.84 573.1 1008.97 570.36 1009.1 578.57 1009.23 584.03 1009.36 592.24 1009.49 562.15 1009.62 592.24 1009.74 570.36 1009.87 575.83 1010 570.36 1010.13 567.62 1010.26 564.89 1010.39 578.57 1010.52 573.1 1010.65 597.71 1010.78 578.57 1010.9 586.77 1011.03 578.57 1011.16 564.89 1011.29 575.83 1011.42 567.62 1011.55 581.3 1011.68 573.1 1011.81 581.3 1011.94 603.18 1012.07 584.03 1012.19 581.3 1012.32 575.83 1012.45 578.57 1012.58 578.57 1012.71 567.62 1012.84 573.1 1012.97 581.3 1013.1 570.36 1013.23 597.71 1013.35 581.3 1013.48 578.57 1013.61 564.89 1013.74 584.03 1013.87 592.24 1014 575.83 1014.13 562.15 1014.26 578.57 1014.39 578.57 1014.52 578.57 1014.64 578.57 1014.77 564.89 1014.9 559.42 1015.03 573.1 1015.16 578.57 1015.29 559.42 1015.42 575.83 1015.55 575.83 1015.68 581.3 1015.8 581.3 1015.93 575.83 1016.06 581.3 1016.19 573.1 1016.32 575.83 1016.45 573.1 1016.58 581.3 1016.71 578.57 1016.84 575.83 1016.97 575.83 1017.09 575.83 1017.22 567.62 1017.35 586.77 1017.48 594.98 1017.61 570.36 1017.74 578.57 1017.87 564.89 1018 578.57 1018.13 589.5 1018.25 556.68 1018.38 573.1 1018.51 581.3 1018.64 584.03 1018.77 573.1 1018.9 584.03 1019.03 573.1 1019.16 567.62 1019.29 589.5 1019.42 581.3 1019.54 573.1 1019.67 562.15 1019.8 567.62 1019.93 581.3 1020.06 562.15 1020.19 581.3 1020.32 578.57 1020.45 573.1 1020.58 586.77 1020.7 551.6 1020.83 564.89 1020.96 575.83 1021.09 584.03 1021.22 589.5 1021.35 573.1 1021.48 570.36 1021.61 581.3 1021.74 578.57 1021.87 573.1 1021.99 578.57 1022.12 594.98 1022.25 570.36 1022.38 575.83 1022.51 570.36 1022.64 584.03 1022.77 597.71 1022.9 589.5 1023.03 575.83 1023.15 556.68 1023.28 553.95 1023.41 575.83 1023.54 592.24 1023.67 581.3 1023.8 573.1 1023.93 573.1 1024.06 575.83 1024.19 564.89 1024.32 586.77 1024.44 597.71 1024.57 586.77 1024.7 589.5 1024.83 556.68 1024.96 578.57 1025.09 592.24 1025.22 570.36 1025.35 567.62 1025.48 575.83 1025.6 575.83 1025.73 567.62 1025.86 573.1 1025.99 584.03 1026.12 570.36 1026.25 567.62 1026.38 573.1 1026.51 567.62 1026.64 570.36 1026.77 578.57 1026.89 578.57 1027.02 570.36 1027.15 581.3 1027.28 564.89 1027.41 564.89 1027.54 597.71 1027.67 578.57 1027.8 584.03 1027.93 584.03 1028.06 575.83 1028.18 578.57 1028.31 573.1 1028.44 573.1 1028.57 573.1 1028.7 584.03 1028.83 581.3 1028.96 562.15 1029.09 600.45 1029.22 559.42 1029.34 581.3 1029.47 564.89 1029.6 603.18 1029.73 581.3 1029.86 567.62 1029.99 575.83 1030.12 567.62 1030.25 586.77 1030.38 581.3 1030.51 584.03 1030.63 573.1 1030.76 573.1 1030.89 578.57 1031.02 578.57 1031.15 578.57 1031.28 575.83 1031.41 586.77 1031.54 578.57 1031.67 578.57 1031.79 581.3 1031.92 581.3 1032.05 562.15 1032.18 584.03 1032.31 573.1 1032.44 564.89 1032.57 570.36 1032.7 575.83 1032.83 567.62 1032.96 589.5 1033.08 589.5 1033.21 581.3 1033.34 578.57 1033.47 578.57 1033.6 559.42 1033.73 559.42 1033.86 575.83 1033.99 573.1 1034.12 586.77 1034.24 573.1 1034.37 589.5 1034.5 562.15 1034.63 581.3 1034.76 570.36 1034.89 589.5 1035.02 562.15 1035.15 570.36 1035.28 556.68 1035.41 575.83 1035.53 592.24 1035.66 584.03 1035.79 589.5 1035.92 562.15 1036.05 581.3 1036.18 584.03 1036.31 570.36 1036.44 573.1 1036.57 573.1 1036.69 581.3 1036.82 594.98 1036.95 589.5 1037.08 597.71 1037.21 564.89 1037.34 567.62 1037.47 581.3 1037.6 570.36 1037.73 570.36 1037.86 570.36 1037.98 570.36 1038.11 567.62 1038.24 575.83 1038.37 597.71 1038.5 603.18 1038.63 564.89 1038.76 570.36 1038.89 600.45 1039.02 575.83 1039.14 584.03 1039.27 581.3 1039.4 600.45 1039.53 567.62 1039.66 575.83 1039.79 567.62 1039.92 564.89 1040.05 564.89 1040.18 559.42 1040.31 573.1 1040.43 573.1 1040.56 581.3 1040.69 570.36 1040.82 578.57 1040.95 586.77 1041.08 564.89 1041.21 570.36 1041.34 603.18 1041.47 594.98 1041.59 578.57 1041.72 589.5 1041.85 564.89 1041.98 573.1 1042.11 570.36 1042.24 567.62 1042.37 562.15 1042.5 578.57 1042.63 570.36 1042.76 573.1 1042.88 567.62 1043.01 570.36 1043.14 562.15 1043.27 570.36 1043.4 581.3 1043.53 575.83 1043.66 586.77 1043.79 573.1 1043.92 562.15 1044.04 581.3 1044.17 592.24 1044.3 575.83 1044.43 581.3 1044.56 575.83 1044.69 581.3 1044.82 575.83 1044.95 586.77 1045.08 562.15 1045.21 578.57 1045.33 570.36 1045.46 567.62 1045.59 578.57 1045.72 570.36 1045.85 578.57 1045.98 581.3 1046.11 578.57 1046.24 570.36 1046.37 586.77 1046.49 584.03 1046.62 584.03 1046.75 581.3 1046.88 564.89 1047.01 575.83 1047.14 578.57 1047.27 573.1 1047.4 564.89 1047.53 584.03 1047.66 564.89 1047.78 597.71 1047.91 584.03 1048.04 562.15 1048.17 559.42 1048.3 573.1 1048.43 578.57 1048.56 567.62 1048.69 578.57 1048.82 559.42 1048.94 564.89 1049.07 567.62 1049.2 584.03 1049.33 564.89 1049.46 578.57 1049.59 578.57 1049.72 578.57 1049.85 575.83 1049.98 570.36 1050.11 567.62 1050.23 567.62 1050.36 549.68 1050.49 578.57 1050.62 608.65 1050.75 581.3 1050.88 575.83 1051.01 586.77 1051.14 562.15 1051.27 573.1 1051.39 573.1 1051.52 575.83 1051.65 564.89 1051.78 578.57 1051.91 570.36 1052.04 551.22 1052.17 575.83 1052.3 581.3 1052.43 584.03 1052.56 567.62 1052.68 573.1 1052.81 581.3 1052.94 584.03 1053.07 573.1 1053.2 545.75 1053.33 553.95 1053.46 575.83 1053.59 575.83 1053.72 575.83 1053.85 592.24 1053.97 589.5 1054.1 578.57 1054.23 575.83 1054.36 586.77 1054.49 559.42 1054.62 570.36 1054.75 562.15 1054.88 562.15 1055.01 575.83 1055.13 551.22 1055.26 573.1 1055.39 592.24 1055.52 597.71 1055.65 575.83 1055.78 564.89 1055.91 573.1 1056.04 556.68 1056.17 578.57 1056.3 570.36 1056.42 567.62 1056.55 584.03 1056.68 570.36 1056.81 570.36 1056.94 564.89 1057.07 562.15 1057.2 564.89 1057.33 581.3 1057.46 567.62 1057.58 564.89 1057.71 573.1 1057.84 567.62 1057.97 567.62 1058.1 562.15 1058.23 573.1 1058.36 570.36 1058.49 573.1 1058.62 573.1 1058.75 581.3 1058.87 578.57 1059 584.03 1059.13 575.83 1059.26 567.62 1059.39 567.62 1059.52 567.62 1059.65 575.83 1059.78 562.15 1059.91 578.57 1060.03 567.62 1060.16 570.36 1060.29 581.3 1060.42 581.3 1060.55 567.62 1060.68 573.1 1060.81 573.1 1060.94 549.08 1061.07 567.62 1061.2 573.1 1061.32 567.62 1061.45 581.3 1061.58 575.83 1061.71 570.36 1061.84 581.3 1061.97 575.83 1062.1 575.83 1062.23 573.1 1062.36 592.24 1062.48 556.68 1062.61 575.83 1062.74 567.62 1062.87 584.03 1063 586.77 1063.13 573.1 1063.26 578.57 1063.39 567.62 1063.52 584.03 1063.65 584.03 1063.77 570.36 1063.9 567.62 1064.03 564.89 1064.16 573.1 1064.29 570.36 1064.42 581.3 1064.55 562.15 1064.68 562.15 1064.81 562.15 1064.93 589.5 1065.06 564.89 1065.19 581.3 1065.32 570.36 1065.45 570.36 1065.58 562.15 1065.71 575.83 1065.84 578.57 1065.97 584.03 1066.1 586.77 1066.22 567.62 1066.35 584.03 1066.48 567.62 1066.61 578.57 1066.74 578.57 1066.87 564.89 1067 564.89 1067.13 584.03 1067.26 575.83 1067.38 573.1 1067.51 567.62 1067.64 581.3 1067.77 578.57 1067.9 575.83 1068.03 567.62 1068.16 564.89 1068.29 578.57 1068.42 556.68 1068.55 570.36 1068.67 581.3 1068.8 589.5 1068.93 578.57 1069.06 597.71 1069.19 573.1 1069.32 567.62 1069.45 562.15 1069.58 570.36 1069.71 589.5 1069.83 575.83 1069.96 567.62 1070.09 594.98 1070.22 581.3 1070.35 567.62 1070.48 573.1 1070.61 592.24 1070.74 578.57 1070.87 573.1 1071 553.95 1071.12 578.57 1071.25 584.03 1071.38 570.36 1071.51 570.36 1071.64 567.62 1071.77 559.42 1071.9 575.83 1072.03 586.77 1072.16 573.1 1072.28 573.1 1072.41 564.89 1072.54 564.89 1072.67 581.3 1072.8 567.62 1072.93 564.89 1073.06 575.83 1073.19 564.89 1073.32 573.1 1073.45 573.1 1073.57 575.83 1073.7 564.89 1073.83 548.35 1073.96 570.36 1074.09 584.03 1074.22 575.83 1074.35 578.57 1074.48 570.36 1074.61 575.83 1074.73 548.48 1074.86 567.62 1074.99 556.68 1075.12 581.3 1075.25 575.83 1075.38 553.95 1075.51 589.5 1075.64 573.1 1075.77 589.5 1075.9 559.42 1076.02 586.77 1076.15 575.83 1076.28 575.83 1076.41 589.5 1076.54 551.22 1076.67 575.83 1076.8 556.68 1076.93 581.3 1077.06 586.77 1077.18 570.36 1077.31 573.1 1077.44 548.15 1077.57 584.03 1077.7 589.5 1077.83 581.3 1077.96 570.36 1078.09 567.62 1078.22 581.3 1078.35 575.83 1078.47 567.62 1078.6 562.15 1078.73 578.57 1078.86 573.1 1078.99 600.45 1079.12 584.03 1079.25 570.36 1079.38 573.1 1079.51 575.83 1079.63 559.42 1079.76 575.83 1079.89 584.03 1080.02 570.36 1080.15 570.36 1080.28 584.03 1080.41 564.89 1080.54 556.68 1080.67 578.57 1080.8 581.3 1080.92 573.1 1081.05 562.15 1081.18 578.57 1081.31 581.3 1081.44 578.57 1081.57 570.36 1081.7 570.36 1081.83 575.83 1081.96 562.15 1082.09 551.22 1082.21 578.57 1082.34 562.15 1082.47 570.36 1082.6 547.86 1082.73 581.3 1082.86 575.83 1082.99 573.1 1083.12 586.77 1083.25 575.83 1083.37 567.62 1083.5 586.77 1083.63 573.1 1083.76 556.68 1083.89 578.57 1084.02 581.3 1084.15 597.71 1084.28 573.1 1084.41 589.5 1084.54 567.62 1084.66 556.68 1084.79 567.62 1084.92 581.3 1085.05 567.62 1085.18 578.57 1085.31 584.03 1085.44 578.57 1085.57 570.36 1085.7 575.83 1085.82 567.62 1085.95 553.95 1086.08 567.62 1086.21 564.89 1086.34 578.57 1086.47 559.42 1086.6 570.36 1086.73 564.89 1086.86 581.3 1086.99 570.36 1087.11 594.98 1087.24 575.83 1087.37 581.3 1087.5 584.03 1087.63 556.68 1087.76 586.77 1087.89 575.83 1088.02 575.83 1088.15 567.62 1088.27 564.89 1088.4 589.5 1088.53 578.57 1088.66 581.3 1088.79 567.62 1088.92 564.89 1089.05 575.83 1089.18 578.57 1089.31 584.03 1089.44 570.36 1089.56 556.68 1089.69 570.36 1089.82 581.3 1089.95 581.3 1090.08 581.3 1090.21 589.5 1090.34 556.68 1090.47 573.1 1090.6 575.83 1090.72 551.22 1090.85 570.36 1090.98 559.42 1091.11 570.36 1091.24 562.15 1091.37 573.1 1091.5 575.83 1091.63 570.36 1091.76 567.62 1091.89 562.15 1092.01 570.36 1092.14 575.83 1092.27 575.83 1092.4 570.36 1092.53 578.57 1092.66 575.83 1092.79 567.62 1092.92 567.62 1093.05 567.62 1093.17 581.3 1093.3 586.77 1093.43 570.36 1093.56 573.1 1093.69 575.83 1093.82 570.36 1093.95 564.89 1094.08 575.83 1094.21 570.36 1094.34 581.3 1094.46 575.83 1094.59 581.3 1094.72 586.77 1094.85 567.62 1094.98 600.45 1095.11 573.1 1095.24 564.89 1095.37 570.36 1095.5 586.77 1095.62 570.36 1095.75 589.5 1095.88 581.3 1096.01 559.42 1096.14 570.36 1096.27 562.15 1096.4 584.03 1096.53 592.24 1096.66 581.3 1096.79 559.42 1096.91 564.89 1097.04 562.15 1097.17 573.1 1097.3 573.1 1097.43 575.83 1097.56 547.01 1097.69 573.1 1097.82 556.68 1097.95 575.83 1098.07 559.42 1098.2 584.03 1098.33 578.57 1098.46 570.36 1098.59 578.57 1098.72 575.83 1098.85 573.1 1098.98 578.57 1099.11 556.68 1099.24 562.15 1099.36 586.77 1099.49 556.68 1099.62 573.1 1099.75 573.1 1099.88 573.1 1100.01 564.89 1100.14 564.89 1100.27 578.57 1100.4 573.1 1100.52 584.03 1100.65 553.95 1100.78 581.3 1100.91 581.3 1101.04 578.57 1101.17 570.36 1101.3 564.89 1101.43 575.83 1101.56 573.1 1101.69 575.83 1101.81 559.42 1101.94 570.36 1102.07 589.5 1102.2 559.42 1102.33 570.36 1102.46 553.95 1102.59 578.57 1102.72 575.83 1102.85 573.1 1102.97 586.77 1103.1 575.83 1103.23 559.42 1103.36 564.89 1103.49 594.98 1103.62 559.42 1103.75 567.62 1103.88 564.89 1104.01 573.1 1104.14 570.36 1104.26 570.36 1104.39 573.1 1104.52 581.3 1104.65 562.15 1104.78 570.36 1104.91 567.62 1105.04 567.62 1105.17 575.83 1105.3 573.1 1105.42 584.03 1105.55 570.36 1105.68 570.36 1105.81 575.83 1105.94 589.5 1106.07 559.42 1106.2 573.1 1106.33 573.1 1106.46 575.83 1106.59 578.57 1106.71 575.83 1106.84 584.03 1106.97 578.57 1107.1 551.22 1107.23 559.42 1107.36 553.95 1107.49 578.57 1107.62 589.5 1107.75 584.03 1107.88 597.71 1108 562.15 1108.13 559.42 1108.26 570.36 1108.39 567.62 1108.52 567.62 1108.65 573.1 1108.78 564.89 1108.91 581.3 1109.04 575.83 1109.16 573.1 1109.29 589.5 1109.42 581.3 1109.55 567.62 1109.68 567.62 1109.81 594.98 1109.94 562.15 1110.07 567.62 1110.2 564.89 1110.33 573.1 1110.45 567.62 1110.58 584.03 1110.71 573.1 1110.84 581.3 1110.97 575.83 1111.1 559.42 1111.23 556.68 1111.36 570.36 1111.49 575.83 1111.61 564.89 1111.74 567.62 1111.87 553.95 1112 564.89 1112.13 594.98 1112.26 570.36 1112.39 575.83 1112.52 578.57 1112.65 570.36 1112.78 570.36 1112.9 575.83 1113.03 556.68 1113.16 567.62 1113.29 567.62 1113.42 570.36 1113.55 559.42 1113.68 581.3 1113.81 559.42 1113.94 573.1 1114.06 556.68 1114.19 559.42 1114.32 567.62 1114.45 575.83 1114.58 567.62 1114.71 567.62 1114.84 586.77 1114.97 575.83 1115.1 578.57 1115.23 559.42 1115.35 556.68 1115.48 578.57 1115.61 575.83 1115.74 584.03 1115.87 570.36 1116 564.89 1116.13 553.95 1116.26 584.03 1116.39 562.15 1116.51 573.1 1116.64 578.57 1116.77 575.83 1116.9 578.57 1117.03 567.62 1117.16 570.36 1117.29 559.42 1117.42 575.83 1117.55 589.5 1117.68 581.3 1117.8 567.62 1117.93 586.77 1118.06 578.57 1118.19 567.62 1118.32 584.03 1118.45 562.15 1118.58 567.62 1118.71 575.83 1118.84 573.1 1118.96 575.83 1119.09 575.83 1119.22 575.83 1119.35 570.36 1119.48 573.1 1119.61 578.57 1119.74 581.3 1119.87 551.22 1120 581.3 1120.13 573.1 1120.25 559.42 1120.38 562.15 1120.51 578.57 1120.64 551.22 1120.77 553.95 1120.9 543.01 1121.03 584.03 1121.16 564.89 1121.29 573.1 1121.41 573.1 1121.54 578.57 1121.67 575.83 1121.8 570.36 1121.93 562.15 1122.06 592.24 1122.19 594.98 1122.32 562.15 1122.45 578.57 1122.58 564.89 1122.7 570.36 1122.83 559.42 1122.96 562.15 1123.09 573.1 1123.22 573.1 1123.35 567.62 1123.48 564.89 1123.61 578.57 1123.74 586.77 1123.86 570.36 1123.99 570.36 1124.12 573.1 1124.25 581.3 1124.38 564.89 1124.51 586.77 1124.64 575.83 1124.77 559.42 1124.9 581.3 1125.03 567.62 1125.15 567.62 1125.28 567.62 1125.41 586.77 1125.54 562.15 1125.67 570.36 1125.8 567.62 1125.93 567.62 1126.06 570.36 1126.19 559.42 1126.31 556.68 1126.44 589.5 1126.57 578.57 1126.7 573.1 1126.83 592.24 1126.96 556.68 1127.09 578.57 1127.22 564.89 1127.35 567.62 1127.48 573.1 1127.6 581.3 1127.73 573.1 1127.86 570.36 1127.99 562.15 1128.12 573.1 1128.25 575.83 1128.38 573.1 1128.51 559.42 1128.64 567.62 1128.76 578.57 1128.89 584.03 1129.02 575.83 1129.15 578.57 1129.28 575.83 1129.41 556.68 1129.54 564.89 1129.67 567.62 1129.8 567.62 1129.93 553.95 1130.05 581.3 1130.18 567.62 1130.31 573.1 1130.44 570.36 1130.57 570.36 1130.7 573.1 1130.83 564.89 1130.96 592.24 1131.09 567.62 1131.21 564.89 1131.34 578.57 1131.47 581.3 1131.6 551.22 1131.73 578.57 1131.86 573.1 1131.99 578.57 1132.12 575.83 1132.25 575.83 1132.38 589.5 1132.5 548.48 1132.63 578.57 1132.76 567.62 1132.89 570.36 1133.02 556.68 1133.15 564.89 1133.28 559.42 1133.41 559.42 1133.54 562.15 1133.67 570.36 1133.79 562.15 1133.92 586.77 1134.05 562.15 1134.18 564.89 1134.31 567.62 1134.44 584.03 1134.57 556.68 1134.7 575.83 1134.83 564.89 1134.95 589.5 1135.08 573.1 1135.21 575.83 1135.34 578.57 1135.47 575.83 1135.6 553.95 1135.73 570.36 1135.86 567.62 1135.99 551.22 1136.12 584.03 1136.24 556.68 1136.37 573.1 1136.5 575.83 1136.63 573.1 1136.76 586.77 1136.89 584.03 1137.02 581.3 1137.15 575.83 1137.28 564.89 1137.4 559.42 1137.53 573.1 1137.66 567.62 1137.79 567.62 1137.92 573.1 1138.05 567.62 1138.18 575.83 1138.31 564.89 1138.44 573.1 1138.57 570.36 1138.69 567.62 1138.82 570.36 1138.95 578.57 1139.08 584.03 1139.21 570.36 1139.34 575.83 1139.47 575.83 1139.6 570.36 1139.73 575.83 1139.85 564.89 1139.98 567.62 1140.11 578.57 1140.24 567.62 1140.37 578.57 1140.5 562.15 1140.63 564.89 1140.76 570.36 1140.89 562.15 1141.02 559.42 1141.14 564.89 1141.27 586.77 1141.4 570.36 1141.53 567.62 1141.66 562.15 1141.79 578.57 1141.92 564.89 1142.05 567.62 1142.18 567.62 1142.3 581.3 1142.43 578.57 1142.56 559.42 1142.69 562.15 1142.82 570.36 1142.95 559.42 1143.08 567.62 1143.21 573.1 1143.34 584.03 1143.47 559.42 1143.59 570.36 1143.72 567.62 1143.85 586.77 1143.98 575.83 1144.11 567.62 1144.24 573.1 1144.37 578.57 1144.5 581.3 1144.63 567.62 1144.75 573.1 1144.88 573.1 1145.01 573.1 1145.14 575.83 1145.27 573.1 1145.4 575.83 1145.53 570.36 1145.66 584.03 1145.79 581.3 1145.92 570.36 1146.04 573.1 1146.17 567.62 1146.3 551.22 1146.43 562.15 1146.56 559.42 1146.69 567.62 1146.82 570.36 1146.95 578.57 1147.08 586.77 1147.2 584.03 1147.33 592.24 1147.46 581.3 1147.59 584.03 1147.72 578.57 1147.85 570.36 1147.98 573.1 1148.11 562.15 1148.24 562.15 1148.37 559.42 1148.49 562.15 1148.62 567.62 1148.75 575.83 1148.88 564.89 1149.01 573.1 1149.14 573.1 1149.27 567.62 1149.4 581.3 1149.53 586.77 1149.65 567.62 1149.78 553.95 1149.91 559.42 1150.04 544.13 1150.17 584.03 1150.3 575.83 1150.43 592.24 1150.56 578.57 1150.69 551.22 1150.82 553.95 1150.94 578.57 1151.07 573.1 1151.2 578.57 1151.33 584.03 1151.46 573.1 1151.59 573.1 1151.72 570.36 1151.85 567.62 1151.98 562.15 1152.1 556.68 1152.23 570.36 1152.36 573.1 1152.49 570.36 1152.62 564.89 1152.75 570.36 1152.88 578.57 1153.01 575.83 1153.14 562.15 1153.27 578.57 1153.39 562.15 1153.52 584.03 1153.65 564.89 1153.78 564.89 1153.91 573.1 1154.04 570.36 1154.17 573.1 1154.3 553.95 1154.43 573.1 1154.55 575.83 1154.68 567.62 1154.81 559.42 1154.94 567.62 1155.07 570.36 1155.2 559.42 1155.33 575.83 1155.46 578.57 1155.59 581.3 1155.72 559.42 1155.84 589.5 1155.97 581.3 1156.1 567.62 1156.23 564.89 1156.36 553.95 1156.49 564.89 1156.62 575.83 1156.75 556.68 1156.88 559.42 1157.01 559.42 1157.13 559.42 1157.26 564.89 1157.39 584.03 1157.52 578.57 1157.65 551.22 1157.78 570.36 1157.91 586.77 1158.04 570.36 1158.17 559.42 1158.29 564.89 1158.42 570.36 1158.55 592.24 1158.68 570.36 1158.81 570.36 1158.94 553.95 1159.07 570.36 1159.2 570.36 1159.33 573.1 1159.46 570.36 1159.58 567.62 1159.71 575.83 1159.84 578.57 1159.97 581.3 1160.1 567.62 1160.23 573.1 1160.36 573.1 1160.49 584.03 1160.62 578.57 1160.74 586.77 1160.87 559.42 1161 559.42 1161.13 564.89 1161.26 570.36 1161.39 564.89 1161.52 584.03 1161.65 581.3 1161.78 559.42 1161.91 578.57 1162.03 570.36 1162.16 575.83 1162.29 592.24 1162.42 575.83 1162.55 562.15 1162.68 556.68 1162.81 592.24 1162.94 584.03 1163.07 575.83 1163.19 559.42 1163.32 559.42 1163.45 553.95 1163.58 553.95 1163.71 573.1 1163.84 578.57 1163.97 562.15 1164.1 573.1 1164.23 570.36 1164.36 573.1 1164.48 573.1 1164.61 562.15 1164.74 578.57 1164.87 586.77 1165 575.83 1165.13 567.62 1165.26 573.1 1165.39 570.36 1165.52 589.5 1165.64 578.57 1165.77 559.42 1165.9 570.36 1166.03 575.83 1166.16 559.42 1166.29 575.83 1166.42 562.15 1166.55 567.62 1166.68 564.89 1166.81 559.42 1166.93 548.48 1167.06 556.68 1167.19 578.57 1167.32 581.3 1167.45 573.1 1167.58 570.36 1167.71 562.15 1167.84 570.36 1167.97 567.62 1168.09 586.77 1168.22 570.36 1168.35 564.89 1168.48 553.95 1168.61 562.15 1168.74 567.62 1168.87 581.3 1169 570.36 1169.13 570.36 1169.26 570.36 1169.38 567.62 1169.51 564.89 1169.64 564.89 1169.77 548.48 1169.9 578.57 1170.03 584.03 1170.16 564.89 1170.29 581.3 1170.42 573.1 1170.54 570.36 1170.67 578.57 1170.8 562.15 1170.93 564.89 1171.06 567.62 1171.19 564.89 1171.32 562.15 1171.45 573.1 1171.58 564.89 1171.71 567.62 1171.83 570.36 1171.96 573.1 1172.09 553.95 1172.22 567.62 1172.35 584.03 1172.48 564.89 1172.61 594.98 1172.74 567.62 1172.87 562.15 1172.99 556.68 1173.12 567.62 1173.25 575.83 1173.38 551.22 1173.51 559.42 1173.64 556.68 1173.77 573.1 1173.9 564.89 1174.03 586.77 1174.16 564.89 1174.28 589.5 1174.41 578.57 1174.54 584.03 1174.67 559.42 1174.8 562.15 1174.93 575.83 1175.06 556.68 1175.19 567.62 1175.32 589.5 1175.44 573.1 1175.57 586.77 1175.7 570.36 1175.83 564.89 1175.96 575.83 1176.09 562.15 1176.22 559.42 1176.35 578.57 1176.48 564.89 1176.61 570.36 1176.73 573.1 1176.86 553.95 1176.99 575.83 1177.12 573.1 1177.25 570.36 1177.38 564.89 1177.51 562.15 1177.64 578.57 1177.77 556.68 1177.89 551.22 1178.02 551.22 1178.15 567.62 1178.28 573.1 1178.41 578.57 1178.54 564.89 1178.67 570.36 1178.8 570.36 1178.93 575.83 1179.06 589.5 1179.18 573.1 1179.31 570.36 1179.44 573.1 1179.57 584.03 1179.7 573.1 1179.83 570.36 1179.96 581.3 1180.09 562.15 1180.22 570.36 1180.34 567.62 1180.47 564.89 1180.6 573.1 1180.73 570.36 1180.86 564.89 1180.99 562.15 1181.12 559.42 1181.25 570.36 1181.38 562.15 1181.51 559.42 1181.63 584.03 1181.76 573.1 1181.89 570.36 1182.02 570.36 1182.15 551.22 1182.28 556.68 1182.41 570.36 1182.54 570.36 1182.67 581.3 1182.8 578.57 1182.92 556.68 1183.05 586.77 1183.18 562.15 1183.31 575.83 1183.44 573.1" fill="none" stroke="#0000ff" stroke-width="2.05" stroke-linejoin="round"/>
<rect x="911" y="517" width="274" height="120" fill="none" stroke="#000" stroke-width="1.8"/>
<line x1="912" y1="637" x2="912" y2="643.94" stroke="#000" stroke-width="1.8"/>
<text x="912" y="660" font-size="9.72" text-anchor="middle">0</text>
<line x1="976" y1="637" x2="976" y2="643.94" stroke="#000" stroke-width="1.8"/>
<text x="976.48" y="660" font-size="9.72" text-anchor="middle">500</text>
<line x1="1041" y1="637" x2="1041" y2="643.94" stroke="#000" stroke-width="1.8"/>
<text x="1040.95" y="660" font-size="9.72" text-anchor="middle">1000</text>
<line x1="1105" y1="637" x2="1105" y2="643.94" stroke="#000" stroke-width="1.8"/>
<text x="1105.42" y="660" font-size="9.72" text-anchor="middle">1500</text>
<line x1="1170" y1="637" x2="1170" y2="643.94" stroke="#000" stroke-width="1.8"/>
<text x="1169.9" y="660" font-size="9.72" text-anchor="middle">2000</text>
<line x1="911" y1="636" x2="904.06" y2="636" stroke="#000" stroke-width="1.8"/>
<text x="895.9" y="640" font-size="9.72" text-anchor="end">920</text>
<line x1="911" y1="609" x2="904.06" y2="609" stroke="#000" stroke-width="1.8"/>
<text x="895.9" y="613" font-size="9.72" text-anchor="end">930</text>
<line x1="911" y1="581" x2="904.06" y2="581" stroke="#000" stroke-width="1.8"/>
<text x="895.9" y="585" font-size="9.72" text-anchor="end">940</text>
<line x1="911" y1="554" x2="904.06" y2="554" stroke="#000" stroke-width="1.8"/>
<text x="895.9" y="558" font-size="9.72" text-anchor="end">950</text>
<line x1="911" y1="527" x2="904.06" y2="527" stroke="#000" stroke-width="1.8"/>
<text x="895.9" y="531" font-size="9.72" text-anchor="end">960</text>
<text x="1048" y="678" font-size="10.42" text-anchor="middle">X</text>
<text x="866.1" y="578.2" font-size="10.42" text-anchor="middle" transform="rotate(-90 866.1 578.2)">counts</text>
<text x="1193.9" y="575.7" font-size="10.42" text-anchor="middle" transform="rotate(90 1193.9 575.7)">cut in x</text>
<rect x="1108.7" y="519.7" width="73.6" height="16.8" rx="2" ry="2" fill="#fff" fill-opacity="0.8" stroke="#ccc" stroke-opacity="0.8" stroke-width="1.1"/>
<line x1="1111.2" y1="527.9" x2="1133.8" y2="527.9" stroke="#0000ff" stroke-width="1.8"/>
<text x="1138.1" y="531.6" font-size="10.0" text-anchor="start">y=1000</text>
<path d="M912 742.36 912.14 723.22 912.27 736.89 912.41 734.15 912.54 731.42 912.68 761.5 912.81 723.22 912.95 756.03 913.08 747.83 913.22 734.15 913.36 750.57 913.49 756.03 913.63 728.68 913.76 742.36 913.9 731.42 914.03 734.15 914.17 742.36 914.3 723.22 914.44 742.36 914.58 720.48 914.71 747.83 914.85 750.57 914.98 747.83 915.12 736.89 915.25 750.57 915.39 747.83 915.52 725.95 915.66 736.89 915.8 728.68 915.93 736.89 916.07 745.1 916.2 747.83 916.34 736.89 916.47 739.62 916.61 745.1 916.74 745.1 916.88 725.95 917.02 728.68 917.15 736.89 917.29 742.36 917.42 745.1 917.56 720.48 917.69 745.1 917.83 717.75 917.96 745.1 918.1 753.3 918.24 720.48 918.37 739.62 918.51 725.95 918.64 736.89 918.78 742.36 918.91 731.42 919.05 742.36 919.18 736.89 919.32 742.36 919.46 756.03 919.59 736.89 919.73 745.1 919.86 742.36 920 736.89 920.13 753.3 920.27 734.15 920.4 734.15 920.54 720.48 920.68 731.42 920.81 736.89 920.95 745.1 921.08 739.62 921.22 753.3 921.35 736.89 921.49 742.36 921.62 742.36 921.76 739.62 921.9 736.89 922.03 736.89 922.17 750.57 922.3 728.68 922.44 739.62 922.57 736.89 922.71 739.62 922.84 747.83 922.98 736.89 923.12 745.1 923.25 747.83 923.39 739.62 923.52 734.15 923.66 734.15 923.79 739.62 923.93 745.1 924.06 742.36 924.2 742.36 924.34 753.3 924.47 731.42 924.61 739.62 924.74 753.3 924.88 725.95 925.01 723.22 925.15 753.3 925.28 742.36 925.42 747.83 925.55 734.15 925.69 753.3 925.83 736.89 925.96 736.89 926.1 728.68 926.23 758.77 926.37 747.83 926.5 742.36 926.64 731.42 926.77 739.62 926.91 734.15 927.05 736.89 927.18 747.83 927.32 742.36 927.45 745.1 927.59 742.36 927.72 747.83 927.86 734.15 927.99 736.89 928.13 758.77 928.27 734.15 928.4 745.1 928.54 753.3 928.67 728.68 928.81 739.62 928.94 736.89 929.08 742.36 929.21 739.62 929.35 756.03 929.49 734.15 929.62 747.83 929.76 739.62 929.89 742.36 930.03 750.57 930.16 753.3 930.3 742.36 930.43 728.68 930.57 745.1 930.71 745.1 930.84 739.62 930.98 745.1 931.11 728.68 931.25 736.89 931.38 717.75 931.52 736.89 931.65 720.48 931.79 745.1 931.93 736.89 932.06 750.57 932.2 745.1 932.33 742.36 932.47 734.15 932.6 728.68 932.74 742.36 932.87 753.3 933.01 739.62 933.15 742.36 933.28 745.1 933.42 731.42 933.55 728.68 933.69 747.83 933.82 747.83 933.96 764.24 934.09 745.1 934.23 731.42 934.37 747.83 934.5 731.42 934.64 734.15 934.77 734.15 934.91 734.15 935.04 739.62 935.18 731.42 935.31 728.68 935.45 736.89 935.59 739.62 935.72 728.68 935.86 725.95 935.99 745.1 936.13 731.42 936.26 739.62 936.4 717.75 936.53 742.36 936.67 745.1 936.81 747.83 936.94 731.42 937.08 750.57 937.21 734.15 937.35 745.1 937.48 728.68 937.62 725.95 937.75 728.68 937.89 758.77 938.03 753.3 938.16 764.24 938.3 715.01 938.43 745.1 938.57 745.1 938.7 739.62 938.84 734.15 938.97 742.36 939.11 739.62 939.25 739.62 939.38 753.3 939.52 723.22 939.65 723.22 939.79 739.62 939.92 742.36 940.06 723.22 940.19 717.75 940.33 739.62 940.47 734.15 940.6 745.1 940.74 736.89 940.87 764.24 941.01 761.5 941.14 736.89 941.28 742.36 941.41 736.89 941.55 739.62 941.69 734.15 941.82 736.89 941.96 742.36 942.09 736.89 942.23 747.83 942.36 725.95 942.5 750.57 942.63 745.1 942.77 731.42 942.91 745.1 943.04 731.42 943.18 725.95 943.31 734.15 943.45 745.1 943.58 723.22 943.72 736.89 943.85 750.57 943.99 720.48 944.13 739.62 944.26 734.15 944.4 731.42 944.53 745.1 944.67 731.42 944.8 753.3 944.94 750.57 945.07 745.1 945.21 720.48 945.35 734.15 945.48 728.68 945.62 745.1 945.75 734.15 945.89 761.5 946.02 742.36 946.16 736.89 946.29 745.1 946.43 758.77 946.57 756.03 946.7 734.15 946.84 728.68 946.97 745.1 947.11 725.95 947.24 753.3 947.38 734.15 947.51 736.89 947.65 731.42 947.79 756.03 947.92 731.42 948.06 739.62 948.19 747.83 948.33 745.1 948.46 742.36 948.6 739.62 948.73 747.83 948.87 750.57 949.01 739.62 949.14 742.36 949.28 736.89 949.41 731.42 949.55 758.77 949.68 742.36 949.82 739.62 949.95 742.36 950.09 750.57 950.23 734.15 950.36 725.95 950.5 742.36 950.63 750.57 950.77 734.15 950.9 742.36 951.04 739.62 951.17 739.62 951.31 745.1 951.45 742.36 951.58 747.83 951.72 761.5 951.85 731.42 951.99 739.62 952.12 742.36 952.26 728.68 952.39 742.36 952.53 731.42 952.66 734.15 952.8 745.1 952.94 753.3 953.07 736.89 953.21 739.62 953.34 731.42 953.48 756.03 953.61 742.36 953.75 739.62 953.88 739.62 954.02 742.36 954.16 739.62 954.29 764.24 954.43 745.1 954.56 747.83 954.7 756.03 954.83 742.36 954.97 745.1 955.1 753.3 955.24 756.03 955.38 739.62 955.51 766.98 955.65 742.36 955.78 753.3 955.92 742.36 956.05 723.22 956.19 734.15 956.32 742.36 956.46 728.68 956.6 725.95 956.73 734.15 956.87 725.95 957 739.62 957.14 736.89 957.27 742.36 957.41 745.1 957.54 742.36 957.68 750.57 957.82 742.36 957.95 720.48 958.09 736.89 958.22 745.1 958.36 725.95 958.49 728.68 958.63 753.3 958.76 750.57 958.9 725.95 959.04 742.36 959.17 739.62 959.31 747.83 959.44 753.3 959.58 731.42 959.71 750.57 959.85 736.89 959.98 725.95 960.12 736.89 960.26 745.1 960.39 736.89 960.53 736.89 960.66 747.83 960.8 739.62 960.93 753.3 961.07 758.77 961.2 747.83 961.34 758.77 961.48 747.83 961.61 745.1 961.75 742.36 961.88 725.95 962.02 753.3 962.15 747.83 962.29 747.83 962.42 753.3 962.56 723.22 962.7 750.57 962.83 745.1 962.97 745.1 963.1 720.48 963.24 745.1 963.37 750.57 963.51 731.42 963.64 750.57 963.78 764.24 963.92 731.42 964.05 734.15 964.19 756.03 964.32 756.03 964.46 745.1 964.59 753.3 964.73 758.77 964.86 756.03 965 725.95 965.14 734.15 965.27 753.3 965.41 745.1 965.54 742.36 965.68 747.83 965.81 745.1 965.95 725.95 966.08 750.57 966.22 750.57 966.36 745.1 966.49 750.57 966.63 747.83 966.76 747.83 966.9 753.3 967.03 731.42 967.17 750.57 967.3 731.42 967.44 753.3 967.58 753.3 967.71 742.36 967.85 747.83 967.98 736.89 968.12 736.89 968.25 723.22 968.39 772.45 968.52 753.3 968.66 745.1 968.8 745.1 968.93 745.1 969.07 720.48 969.2 766.98 969.34 736.89 969.47 747.83 969.61 745.1 969.74 734.15 969.88 745.1 970.02 736.89 970.15 731.42 970.29 734.15 970.42 761.5 970.56 750.57 970.69 756.03 970.83 753.3 970.96 745.1 971.1 723.22 971.24 750.57 971.37 747.83 971.51 745.1 971.64 728.68 971.78 750.57 971.91 739.62 972.05 736.89 972.18 739.62 972.32 764.24 972.46 758.77 972.59 736.89 972.73 761.5 972.86 747.83 973 758.77 973.13 742.36 973.27 745.1 973.4 761.5 973.54 747.83 973.68 756.03 973.81 750.57 973.95 734.15 974.08 742.36 974.22 742.36 974.35 731.42 974.49 745.1 974.62 731.42 974.76 742.36 974.9 742.36 975.03 747.83 975.17 753.3 975.3 756.03 975.44 753.3 975.57 739.62 975.71 742.36 975.84 753.3 975.98 734.15 976.12 750.57 976.25 747.83 976.39 758.77 976.52 753.3 976.66 736.89 976.79 742.36 976.93 750.57 977.06 734.15 977.2 745.1 977.34 745.1 977.47 734.15 977.61 739.62 977.74 747.83 977.88 756.03 978.01 734.15 978.15 766.98 978.28 750.57 978.42 761.5 978.56 750.57 978.69 736.89 978.83 747.83 978.96 750.57 979.1 745.1 979.23 725.95 979.37 731.42 979.5 742.36 979.64 750.57 979.77 747.83 979.91 742.36 980.05 747.83 980.18 747.83 980.32 756.03 980.45 758.77 980.59 756.03 980.72 742.36 980.86 753.3 980.99 720.48 981.13 739.62 981.27 739.62 981.4 736.89 981.54 756.03 981.67 756.03 981.81 747.83 981.94 739.62 982.08 739.62 982.21 728.68 982.35 731.42 982.49 734.15 982.62 734.15 982.76 742.36 982.89 736.89 983.03 747.83 983.16 747.83 983.3 734.15 983.43 758.77 983.57 731.42 983.71 725.95 983.84 747.83 983.98 736.89 984.11 742.36 984.25 753.3 984.38 739.62 984.52 739.62 984.65 734.15 984.79 747.83 984.93 742.36 985.06 750.57 985.2 734.15 985.33 745.1 985.47 736.89 985.6 750.57 985.74 742.36 985.87 753.3 986.01 750.57 986.15 734.15 986.28 745.1 986.42 745.1 986.55 736.89 986.69 750.57 986.82 725.95 986.96 750.57 987.09 747.83 987.23 723.22 987.37 761.5 987.5 725.95 987.64 739.62 987.77 739.62 987.91 753.3 988.04 742.36 988.18 756.03 988.31 734.15 988.45 745.1 988.59 750.57 988.72 747.83 988.86 745.1 988.99 734.15 989.13 739.62 989.26 750.57 989.4 753.3 989.53 753.3 989.67 736.89 989.81 739.62 989.94 756.03 990.08 758.77 990.21 745.1 990.35 750.57 990.48 739.62 990.62 745.1 990.75 739.62 990.89 736.89 991.03 734.15 991.16 747.83 991.3 736.89 991.43 750.57 991.57 756.03 991.7 742.36 991.84 734.15 991.97 731.42 992.11 745.1 992.25 761.5 992.38 742.36 992.52 747.83 992.65 739.62 992.79 734.15 992.92 747.83 993.06 750.57 993.19 747.83 993.33 750.57 993.47 753.3 993.6 742.36 993.74 750.57 993.87 747.83 994.01 747.83 994.14 750.57 994.28 739.62 994.41 750.57 994.55 745.1 994.69 736.89 994.82 745.1 994.96 758.77 995.09 750.57 995.23 750.57 995.36 739.62 995.5 728.68 995.63 742.36 995.77 745.1 995.91 731.42 996.04 750.57 996.18 742.36 996.31 739.62 996.45 745.1 996.58 747.83 996.72 742.36 996.85 731.42 996.99 739.62 997.13 750.57 997.26 742.36 997.4 736.89 997.53 728.68 997.67 736.89 997.8 742.36 997.94 731.42 998.07 736.89 998.21 742.36 998.35 750.57 998.48 745.1 998.62 736.89 998.75 756.03 998.89 758.77 999.02 739.62 999.16 758.77 999.29 756.03 999.43 747.83 999.57 747.83 999.7 745.1 999.84 742.36 999.97 739.62 1000.11 745.1 1000.24 753.3 1000.38 772.45 1000.51 734.15 1000.65 736.89 1000.79 739.62 1000.92 745.1 1001.06 753.3 1001.19 739.62 1001.33 745.1 1001.46 758.77 1001.6 736.89 1001.73 758.77 1001.87 750.57 1002.01 728.68 1002.14 753.3 1002.28 745.1 1002.41 736.89 1002.55 745.1 1002.68 758.77 1002.82 750.57 1002.95 745.1 1003.09 758.77 1003.23 731.42 1003.36 742.36 1003.5 739.62 1003.63 742.36 1003.77 742.36 1003.9 747.83 1004.04 758.77 1004.17 739.62 1004.31 745.1 1004.45 731.42 1004.58 756.03 1004.72 745.1 1004.85 725.95 1004.99 758.77 1005.12 756.03 1005.26 742.36 1005.39 728.68 1005.53 756.03 1005.67 745.1 1005.8 747.83 1005.94 750.57 1006.07 747.83 1006.21 734.15 1006.34 745.1 1006.48 758.77 1006.61 750.57 1006.75 745.1 1006.88 758.77 1007.02 753.3 1007.16 750.57 1007.29 766.98 1007.43 728.68 1007.56 761.5 1007.7 745.1 1007.83 747.83 1007.97 750.57 1008.1 734.15 1008.24 745.1 1008.38 753.3 1008.51 734.15 1008.65 739.62 1008.78 756.03 1008.92 761.5 1009.05 736.89 1009.19 747.83 1009.32 758.77 1009.46 739.62 1009.6 758.77 1009.73 753.3 1009.87 753.3 1010 764.24 1010.14 739.62 1010.27 718.86 1010.41 739.62 1010.54 742.36 1010.68 747.83 1010.82 747.83 1010.95 742.36 1011.09 739.62 1011.22 750.57 1011.36 745.1 1011.49 747.83 1011.63 739.62 1011.76 736.89 1011.9 734.15 1012.04 750.57 1012.17 750.57 1012.31 739.62 1012.44 747.83 1012.58 747.83 1012.71 742.36 1012.85 742.36 1012.98 734.15 1013.12 756.03 1013.26 734.15 1013.39 750.57 1013.53 739.62 1013.66 758.77 1013.8 747.83 1013.93 750.57 1014.07 728.68 1014.2 753.3 1014.34 734.15 1014.48 753.3 1014.61 756.03 1014.75 742.36 1014.88 734.15 1015.02 745.1 1015.15 739.62 1015.29 742.36 1015.42 745.1 1015.56 731.42 1015.7 745.1 1015.83 736.89 1015.97 756.03 1016.1 747.83 1016.24 736.89 1016.37 750.57 1016.51 764.24 1016.64 736.89 1016.78 739.62 1016.92 747.83 1017.05 745.1 1017.19 747.83 1017.32 742.36 1017.46 734.15 1017.59 742.36 1017.73 745.1 1017.86 750.57 1018 745.1 1018.14 750.57 1018.27 736.89 1018.41 756.03 1018.54 750.57 1018.68 742.36 1018.81 742.36 1018.95 742.36 1019.08 747.83 1019.22 742.36 1019.36 758.77 1019.49 758.77 1019.63 756.03 1019.76 742.36 1019.9 731.42 1020.03 747.83 1020.17 750.57 1020.3 747.83 1020.44 728.68 1020.58 742.36 1020.71 742.36 1020.85 750.57 1020.98 739.62 1021.12 731.42 1021.25 742.36 1021.39 753.3 1021.52 731.42 1021.66 745.1 1021.8 728.68 1021.93 753.3 1022.07 745.1 1022.2 742.36 1022.34 761.5 1022.47 742.36 1022.61 739.62 1022.74 745.1 1022.88 739.62 1023.02 742.36 1023.15 753.3 1023.29 736.89 1023.42 750.57 1023.56 747.83 1023.69 750.57 1023.83 739.62 1023.96 747.83 1024.1 747.83 1024.24 764.24 1024.37 747.83 1024.51 734.15 1024.64 764.24 1024.78 742.36 1024.91 745.1 1025.05 761.5 1025.18 747.83 1025.32 736.89 1025.46 745.1 1025.59 742.36 1025.73 734.15 1025.86 747.83 1026 736.89 1026.13 756.03 1026.27 753.3 1026.4 731.42 1026.54 731.42 1026.68 736.89 1026.81 758.77 1026.95 747.83 1027.08 753.3 1027.22 725.95 1027.35 756.03 1027.49 756.03 1027.62 750.57 1027.76 742.36 1027.9 750.57 1028.03 747.83 1028.17 742.36 1028.3 745.1 1028.44 761.5 1028.57 756.03 1028.71 728.68 1028.84 745.1 1028.98 728.68 1029.12 731.42 1029.25 734.15 1029.39 745.1 1029.52 728.68 1029.66 747.83 1029.79 723.22 1029.93 739.62 1030.06 739.62 1030.2 747.83 1030.34 750.57 1030.47 745.1 1030.61 747.83 1030.74 753.3 1030.88 753.3 1031.01 742.36 1031.15 731.42 1031.28 725.95 1031.42 736.89 1031.56 745.1 1031.69 736.89 1031.83 728.68 1031.96 742.36 1032.1 734.15 1032.23 739.62 1032.37 742.36 1032.5 747.83 1032.64 736.89 1032.78 750.57 1032.91 753.3 1033.05 739.62 1033.18 734.15 1033.32 734.15 1033.45 736.89 1033.59 747.83 1033.72 745.1 1033.86 734.15 1033.99 723.22 1034.13 769.71 1034.27 731.42 1034.4 742.36 1034.54 745.1 1034.67 750.57 1034.81 750.57 1034.94 756.03 1035.08 742.36 1035.21 753.3 1035.35 745.1 1035.49 758.77 1035.62 731.42 1035.76 736.89 1035.89 756.03 1036.03 739.62 1036.16 747.83 1036.3 753.3 1036.43 742.36 1036.57 736.89 1036.71 728.68 1036.84 742.36 1036.98 734.15 1037.11 736.89 1037.25 736.89 1037.38 734.15 1037.52 756.03 1037.65 747.83 1037.79 728.68 1037.93 756.03 1038.06 750.57 1038.2 725.95 1038.33 753.3 1038.47 742.36 1038.6 742.36 1038.74 747.83 1038.87 734.15 1039.01 736.89 1039.15 750.57 1039.28 728.68 1039.42 750.57 1039.55 747.83 1039.69 745.1 1039.82 742.36 1039.96 756.03 1040.09 742.36 1040.23 764.24 1040.37 747.83 1040.5 753.3 1040.64 750.57 1040.77 745.1 1040.91 742.36 1041.04 750.57 1041.18 745.1 1041.31 758.77 1041.45 747.83 1041.59 736.89 1041.72 750.57 1041.86 747.83 1041.99 745.1 1042.13 736.89 1042.26 742.36 1042.4 747.83 1042.53 753.3 1042.67 742.36 1042.81 772.45 1042.94 742.36 1043.08 753.3 1043.21 739.62 1043.35 745.1 1043.48 731.42 1043.62 750.57 1043.75 764.24 1043.89 745.1 1044.03 750.57 1044.16 745.1 1044.3 734.15 1044.43 753.3 1044.57 739.62 1044.7 736.89 1044.84 734.15 1044.97 764.24 1045.11 745.1 1045.25 750.57 1045.38 747.83 1045.52 753.3 1045.65 747.83 1045.79 736.89 1045.92 728.68 1046.06 739.62 1046.19 756.03 1046.33 734.15 1046.47 756.03 1046.6 747.83 1046.74 734.15 1046.87 750.57 1047.01 739.62 1047.14 747.83 1047.28 756.03 1047.41 742.36 1047.55 750.57 1047.69 728.68 1047.82 728.68 1047.96 731.42 1048.09 756.03 1048.23 728.68 1048.36 742.36 1048.5 739.62 1048.63 742.36 1048.77 750.57 1048.91 745.1 1049.04 736.89 1049.18 731.42 1049.31 739.62 1049.45 745.1 1049.58 750.57 1049.72 747.83 1049.85 731.42 1049.99 739.62 1050.13 742.36 1050.26 761.5 1050.4 761.5 1050.53 739.62 1050.67 739.62 1050.8 734.15 1050.94 742.36 1051.07 750.57 1051.21 761.5 1051.35 753.3 1051.48 766.98 1051.62 742.36 1051.75 739.62 1051.89 731.42 1052.02 761.5 1052.16 758.77 1052.29 739.62 1052.43 742.36 1052.57 764.24 1052.7 750.57 1052.84 745.1 1052.97 747.83 1053.11 742.36 1053.24 745.1 1053.38 750.57 1053.51 742.36 1053.65 745.1 1053.79 734.15 1053.92 758.77 1054.06 747.83 1054.19 750.57 1054.33 747.83 1054.46 742.36 1054.6 739.62 1054.73 764.24 1054.87 734.15 1055.01 739.62 1055.14 739.62 1055.28 745.1 1055.41 736.89 1055.55 742.36 1055.68 761.5 1055.82 750.57 1055.95 747.83 1056.09 747.83 1056.23 750.57 1056.36 739.62 1056.5 756.03 1056.63 753.3 1056.77 756.03 1056.9 745.1 1057.04 742.36 1057.17 753.3 1057.31 742.36 1057.45 750.57 1057.58 731.42 1057.72 766.98 1057.85 745.1 1057.99 734.15 1058.12 747.83 1058.26 756.03 1058.39 753.3 1058.53 739.62 1058.67 750.57 1058.8 734.15 1058.94 745.1 1059.07 750.57 1059.21 750.57 1059.34 739.62 1059.48 736.89 1059.61 753.3 1059.75 756.03 1059.89 756.03 1060.02 739.62 1060.16 728.68 1060.29 750.57 1060.43 739.62 1060.56 747.83 1060.7 736.89 1060.83 758.77 1060.97 739.62 1061.11 758.77 1061.24 753.3 1061.38 742.36 1061.51 747.83 1061.65 745.1 1061.78 739.62 1061.92 742.36 1062.05 731.42 1062.19 736.89 1062.32 753.3 1062.46 745.1 1062.6 750.57 1062.73 747.83 1062.87 728.68 1063 753.3 1063.14 734.15 1063.27 731.42 1063.41 720.48 1063.54 745.1 1063.68 742.36 1063.82 742.36 1063.95 747.83 1064.09 728.68 1064.22 725.95 1064.36 766.98 1064.49 747.83 1064.63 734.15 1064.76 756.03 1064.9 750.57 1065.04 745.1 1065.17 745.1 1065.31 747.83 1065.44 745.1 1065.58 728.68 1065.71 766.98 1065.85 750.57 1065.98 756.03 1066.12 742.36 1066.26 750.57 1066.39 739.62 1066.53 745.1 1066.66 723.22 1066.8 758.77 1066.93 750.57 1067.07 736.89 1067.2 747.83 1067.34 745.1 1067.48 758.77 1067.61 739.62 1067.75 745.1 1067.88 739.62 1068.02 753.3 1068.15 750.57 1068.29 753.3 1068.42 728.68 1068.56 761.5 1068.7 742.36 1068.83 742.36 1068.97 734.15 1069.1 742.36 1069.24 756.03 1069.37 739.62 1069.51 761.5 1069.64 734.15 1069.78 745.1 1069.92 753.3 1070.05 750.57 1070.19 739.62 1070.32 761.5 1070.46 728.68 1070.59 753.3 1070.73 731.42 1070.86 745.1 1071 725.95 1071.14 756.03 1071.27 736.89 1071.41 745.1 1071.54 750.57 1071.68 736.89 1071.81 747.83 1071.95 753.3 1072.08 747.83 1072.22 753.3 1072.36 747.83 1072.49 745.1 1072.63 734.15 1072.76 745.1 1072.9 753.3 1073.03 736.89 1073.17 747.83 1073.3 756.03 1073.44 756.03 1073.58 728.68 1073.71 747.83 1073.85 728.68 1073.98 756.03 1074.12 756.03 1074.25 728.68 1074.39 747.83 1074.52 747.83 1074.66 747.83 1074.8 756.03 1074.93 736.89 1075.07 756.03 1075.2 736.89 1075.34 756.03 1075.47 720.48 1075.61 739.62 1075.74 734.15 1075.88 761.5 1076.02 742.36 1076.15 750.57 1076.29 753.3 1076.42 753.3 1076.56 736.89 1076.69 745.1 1076.83 750.57 1076.96 750.57 1077.1 750.57 1077.24 750.57 1077.37 747.83 1077.51 756.03 1077.64 753.3 1077.78 766.98 1077.91 745.1 1078.05 739.62 1078.18 750.57 1078.32 731.42 1078.46 753.3 1078.59 745.1 1078.73 734.15 1078.86 742.36 1079 753.3 1079.13 742.36 1079.27 750.57 1079.4 734.15 1079.54 736.89 1079.68 747.83 1079.81 739.62 1079.95 728.68 1080.08 734.15 1080.22 736.89 1080.35 747.83 1080.49 750.57 1080.62 753.3 1080.76 736.89 1080.9 756.03 1081.03 742.36 1081.17 731.42 1081.3 761.5 1081.44 742.36 1081.57 756.03 1081.71 747.83 1081.84 739.62 1081.98 756.03 1082.12 758.77 1082.25 750.57 1082.39 742.36 1082.52 750.57 1082.66 753.3 1082.79 739.62 1082.93 756.03 1083.06 758.77 1083.2 745.1 1083.34 725.95 1083.47 750.57 1083.61 745.1 1083.74 756.03 1083.88 750.57 1084.01 756.03 1084.15 742.36 1084.28 753.3 1084.42 753.3 1084.56 736.89 1084.69 758.77 1084.83 736.89 1084.96 747.83 1085.1 753.3 1085.23 745.1 1085.37 747.83 1085.5 742.36 1085.64 747.83 1085.78 728.68 1085.91 734.15 1086.05 734.15 1086.18 756.03 1086.32 747.83 1086.45 734.15 1086.59 739.62 1086.72 745.1 1086.86 745.1 1087 734.15 1087.13 764.24 1087.27 753.3 1087.4 758.77 1087.54 734.15 1087.67 758.77 1087.81 747.83 1087.94 731.42 1088.08 747.83 1088.21 742.36 1088.35 745.1 1088.49 739.62 1088.62 723.22 1088.76 756.03 1088.89 745.1 1089.03 728.68 1089.16 723.22 1089.3 747.83 1089.43 731.42 1089.57 739.62 1089.71 739.62 1089.84 758.77 1089.98 761.5 1090.11 745.1 1090.25 745.1 1090.38 745.1 1090.52 756.03 1090.65 731.42 1090.79 747.83 1090.93 720.48 1091.06 747.83 1091.2 742.36 1091.33 736.89 1091.47 747.83 1091.6 756.03 1091.74 750.57 1091.87 745.1 1092.01 750.57 1092.15 725.95 1092.28 750.57 1092.42 736.89 1092.55 736.89 1092.69 742.36 1092.82 756.03 1092.96 739.62 1093.09 736.89 1093.23 742.36 1093.37 745.1 1093.5 766.98 1093.64 756.03 1093.77 747.83 1093.91 742.36 1094.04 736.89 1094.18 747.83 1094.31 742.36 1094.45 756.03 1094.59 739.62 1094.72 736.89 1094.86 745.1 1094.99 736.89 1095.13 747.83 1095.26 750.57 1095.4 747.83 1095.53 725.95 1095.67 761.5 1095.81 742.36 1095.94 747.83 1096.08 745.1 1096.21 758.77 1096.35 736.89 1096.48 739.62 1096.62 747.83 1096.75 747.83 1096.89 745.1 1097.03 736.89 1097.16 758.77 1097.3 731.42 1097.43 747.83 1097.57 736.89 1097.7 753.3 1097.84 725.95 1097.97 742.36 1098.11 728.68 1098.25 750.57 1098.38 750.57 1098.52 734.15 1098.65 736.89 1098.79 742.36 1098.92 734.15 1099.06 739.62 1099.19 747.83 1099.33 761.5 1099.47 766.98 1099.6 739.62 1099.74 739.62 1099.87 753.3 1100.01 739.62 1100.14 747.83 1100.28 745.1 1100.41 734.15 1100.55 758.77 1100.69 742.36 1100.82 739.62 1100.96 745.1 1101.09 742.36 1101.23 756.03 1101.36 742.36 1101.5 739.62 1101.63 736.89 1101.77 750.57 1101.91 736.89 1102.04 742.36 1102.18 736.89 1102.31 745.1 1102.45 739.62 1102.58 742.36 1102.72 720.48 1102.85 747.83 1102.99 734.15 1103.13 745.1 1103.26 758.77 1103.4 739.62 1103.53 734.15 1103.67 736.89 1103.8 736.89 1103.94 753.3 1104.07 742.36 1104.21 758.77 1104.35 728.68 1104.48 728.68 1104.62 753.3 1104.75 747.83 1104.89 756.03 1105.02 750.57 1105.16 747.83 1105.29 756.03 1105.43 747.83 1105.57 739.62 1105.7 747.83 1105.84 736.89 1105.97 745.1 1106.11 742.36 1106.24 756.03 1106.38 736.89 1106.51 756.03 1106.65 747.83 1106.79 756.03 1106.92 739.62 1107.06 753.3 1107.19 739.62 1107.33 725.95 1107.46 742.36 1107.6 766.98 1107.73 734.15 1107.87 742.36 1108.01 739.62 1108.14 739.62 1108.28 734.15 1108.41 734.15 1108.55 745.1 1108.68 756.03 1108.82 745.1 1108.95 736.89 1109.09 761.5 1109.23 742.36 1109.36 761.5 1109.5 734.15 1109.63 725.95 1109.77 736.89 1109.9 747.83 1110.04 736.89 1110.17 731.42 1110.31 728.68 1110.45 731.42 1110.58 734.15 1110.72 753.3 1110.85 745.1 1110.99 739.62 1111.12 745.1 1111.26 764.24 1111.39 745.1 1111.53 750.57 1111.67 742.36 1111.8 742.36 1111.94 758.77 1112.07 750.57 1112.21 742.36 1112.34 753.3 1112.48 745.1 1112.61 753.3 1112.75 750.57 1112.89 736.89 1113.02 745.1 1113.16 750.57 1113.29 728.68 1113.43 747.83 1113.56 745.1 1113.7 745.1 1113.83 719.01 1113.97 739.62 1114.11 736.89 1114.24 747.83 1114.38 736.89 1114.51 734.15 1114.65 756.03 1114.78 739.62 1114.92 728.68 1115.05 725.95 1115.19 742.36 1115.33 723.22 1115.46 750.57 1115.6 734.15 1115.73 739.62 1115.87 753.3 1116 734.15 1116.14 756.03 1116.27 750.57 1116.41 745.1 1116.54 756.03 1116.68 734.15 1116.82 747.83 1116.95 756.03 1117.09 742.36 1117.22 745.1 1117.36 756.03 1117.49 750.57 1117.63 736.89 1117.76 736.89 1117.9 758.77 1118.04 734.15 1118.17 734.15 1118.31 734.15 1118.44 747.83 1118.58 750.57 1118.71 745.1 1118.85 750.57 1118.98 747.83 1119.12 750.57 1119.26 747.83 1119.39 747.83 1119.53 745.1 1119.66 742.36 1119.8 747.83 1119.93 750.57 1120.07 728.68 1120.2 734.15 1120.34 739.62 1120.48 753.3 1120.61 736.89 1120.75 745.1 1120.88 739.62 1121.02 742.36 1121.15 720.48 1121.29 745.1 1121.42 753.3 1121.56 734.15 1121.7 734.15 1121.83 731.42 1121.97 769.71 1122.1 753.3 1122.24 753.3 1122.37 758.77 1122.51 742.36 1122.64 736.89 1122.78 734.15 1122.92 736.89 1123.05 745.1 1123.19 728.68 1123.32 742.36 1123.46 772.45 1123.59 747.83 1123.73 753.3 1123.86 742.36 1124 747.83 1124.14 747.83 1124.27 731.42 1124.41 753.3 1124.54 758.77 1124.68 742.36 1124.81 739.62 1124.95 745.1 1125.08 745.1 1125.22 750.57 1125.36 758.77 1125.49 753.3 1125.63 756.03 1125.76 734.15 1125.9 747.83 1126.03 731.42 1126.17 747.83 1126.3 753.3 1126.44 742.36 1126.58 742.36 1126.71 731.42 1126.85 764.24 1126.98 750.57 1127.12 742.36 1127.25 753.3 1127.39 745.1 1127.52 747.83 1127.66 731.42 1127.8 734.15 1127.93 764.24 1128.07 758.77 1128.2 753.3 1128.34 745.1 1128.47 747.83 1128.61 750.57 1128.74 739.62 1128.88 736.89 1129.02 745.1 1129.15 747.83 1129.29 745.1 1129.42 753.3 1129.56 736.89 1129.69 736.89 1129.83 753.3 1129.96 731.42 1130.1 745.1 1130.24 736.89 1130.37 745.1 1130.51 747.83 1130.64 739.62 1130.78 753.3 1130.91 747.83 1131.05 756.03 1131.18 739.62 1131.32 747.83 1131.46 747.83 1131.59 750.57 1131.73 739.62 1131.86 742.36 1132 747.83 1132.13 750.57 1132.27 728.68 1132.4 731.42 1132.54 756.03 1132.68 734.15 1132.81 739.62 1132.95 742.36 1133.08 742.36 1133.22 758.77 1133.35 720.48 1133.49 725.95 1133.62 745.1 1133.76 745.1 1133.9 742.36 1134.03 750.57 1134.17 739.62 1134.3 745.1 1134.44 756.03 1134.57 750.57 1134.71 750.57 1134.84 750.57 1134.98 747.83 1135.12 739.62 1135.25 750.57 1135.39 761.5 1135.52 731.42 1135.66 750.57 1135.79 731.42 1135.93 742.36 1136.06 739.62 1136.2 753.3 1136.34 745.1 1136.47 747.83 1136.61 745.1 1136.74 739.62 1136.88 747.83 1137.01 736.89 1137.15 758.77 1137.28 756.03 1137.42 742.36 1137.56 739.62 1137.69 734.15 1137.83 728.68 1137.96 742.36 1138.1 736.89 1138.23 742.36 1138.37 745.1 1138.5 745.1 1138.64 745.1 1138.78 750.57 1138.91 747.83 1139.05 736.89 1139.18 739.62 1139.32 734.15 1139.45 750.57 1139.59 747.83 1139.72 742.36 1139.86 753.3 1140 753.3 1140.13 739.62 1140.27 747.83 1140.4 736.89 1140.54 745.1 1140.67 750.57 1140.81 756.03 1140.94 734.15 1141.08 745.1 1141.22 753.3 1141.35 758.77 1141.49 756.03 1141.62 750.57 1141.76 734.15 1141.89 753.3 1142.03 742.36 1142.16 742.36 1142.3 777.91 1142.43 758.77 1142.57 736.89 1142.71 764.24 1142.84 734.15 1142.98 745.1 1143.11 761.5 1143.25 728.68 1143.38 747.83 1143.52 731.42 1143.65 745.1 1143.79 753.3 1143.93 734.15 1144.06 728.68 1144.2 734.15 1144.33 756.03 1144.47 739.62 1144.6 756.03 1144.74 750.57 1144.87 734.15 1145.01 758.77 1145.15 723.22 1145.28 761.5 1145.42 758.77 1145.55 739.62 1145.69 747.83 1145.82 747.83 1145.96 756.03 1146.09 739.62 1146.23 745.1 1146.37 747.83 1146.5 753.3 1146.64 761.5 1146.77 745.1 1146.91 766.98 1147.04 753.3 1147.18 739.62 1147.31 739.62 1147.45 750.57 1147.59 769.71 1147.72 739.62 1147.86 736.89 1147.99 745.1 1148.13 734.15 1148.26 736.89 1148.4 761.5 1148.53 747.83 1148.67 750.57 1148.81 731.42 1148.94 736.89 1149.08 745.1 1149.21 739.62 1149.35 736.89 1149.48 753.3 1149.62 747.83 1149.75 747.83 1149.89 750.57 1150.03 747.83 1150.16 745.1 1150.3 758.77 1150.43 756.03 1150.57 739.62 1150.7 731.42 1150.84 728.68 1150.97 764.24 1151.11 742.36 1151.25 753.3 1151.38 750.57 1151.52 747.83 1151.65 742.36 1151.79 739.62 1151.92 769.71 1152.06 750.57 1152.19 736.89 1152.33 745.1 1152.47 761.5 1152.6 756.03 1152.74 753.3 1152.87 736.89 1153.01 728.68 1153.14 756.03 1153.28 742.36 1153.41 747.83 1153.55 739.62 1153.69 747.83 1153.82 756.03 1153.96 753.3 1154.09 753.3 1154.23 731.42 1154.36 753.3 1154.5 739.62 1154.63 753.3 1154.77 753.3 1154.91 745.1 1155.04 750.57 1155.18 728.68 1155.31 734.15 1155.45 756.03 1155.58 742.36 1155.72 731.42 1155.85 758.77 1155.99 750.57 1156.13 731.42 1156.26 753.3 1156.4 739.62 1156.53 747.83 1156.67 745.1 1156.8 756.03 1156.94 747.83 1157.07 750.57 1157.21 728.68 1157.35 739.62 1157.48 745.1 1157.62 747.83 1157.75 739.62 1157.89 761.5 1158.02 756.03 1158.16 756.03 1158.29 753.3 1158.43 761.5 1158.57 742.36 1158.7 750.57 1158.84 734.15 1158.97 747.83 1159.11 750.57 1159.24 742.36 1159.38 742.36 1159.51 750.57 1159.65 739.62 1159.79 734.15 1159.92 750.57 1160.06 734.15 1160.19 747.83 1160.33 736.89 1160.46 747.83 1160.6 750.57 1160.73 742.36 1160.87 756.03 1161.01 761.5 1161.14 747.83 1161.28 747.83 1161.41 756.03 1161.55 725.95 1161.68 742.36 1161.82 753.3 1161.95 742.36 1162.09 742.36 1162.23 750.57 1162.36 747.83 1162.5 764.24 1162.63 745.1 1162.77 728.68 1162.9 734.15 1163.04 736.89 1163.17 753.3 1163.31 756.03 1163.45 736.89 1163.58 742.36 1163.72 747.83 1163.85 750.57 1163.99 736.89 1164.12 739.62 1164.26 750.57 1164.39 747.83 1164.53 761.5 1164.67 758.77 1164.8 742.36 1164.94 750.57 1165.07 756.03 1165.21 745.1 1165.34 734.15 1165.48 753.3 1165.61 750.57 1165.75 747.83 1165.89 723.22 1166.02 736.89 1166.16 745.1 1166.29 758.77 1166.43 739.62 1166.56 742.36 1166.7 747.83 1166.83 753.3 1166.97 750.57 1167.11 761.5 1167.24 750.57 1167.38 750.57 1167.51 756.03 1167.65 750.57 1167.78 761.5 1167.92 736.89 1168.05 747.83 1168.19 758.77 1168.33 739.62 1168.46 742.36 1168.6 750.57 1168.73 758.77 1168.87 747.83 1169 742.36 1169.14 739.62 1169.27 736.89 1169.41 739.62 1169.55 761.5 1169.68 745.1 1169.82 764.24 1169.95 736.89 1170.09 742.36 1170.22 736.89 1170.36 745.1 1170.49 747.83 1170.63 750.57 1170.76 772.45 1170.9 747.83 1171.04 723.22 1171.17 734.15 1171.31 747.83 1171.44 742.36 1171.58 742.36 1171.71 753.3 1171.85 747.83 1171.98 742.36 1172.12 750.57 1172.26 742.36 1172.39 734.15 1172.53 739.62 1172.66 745.1 1172.8 747.83 1172.93 739.62 1173.07 750.57 1173.2 753.3 1173.34 734.15 1173.48 750.57 1173.61 758.77 1173.75 739.62 1173.88 739.62 1174.02 736.89 1174.15 747.83 1174.29 734.15 1174.42 747.83 1174.56 756.03 1174.7 747.83 1174.83 745.1 1174.97 756.03 1175.1 747.83 1175.24 745.1 1175.37 750.57 1175.51 745.1 1175.64 747.83 1175.78 753.3 1175.92 742.36 1176.05 739.62 1176.19 764.24 1176.32 753.3 1176.46 739.62 1176.59 742.36 1176.73 764.24 1176.86 745.1 1177 734.15 1177.14 736.89 1177.27 739.62 1177.41 747.83 1177.54 745.1 1177.68 756.03 1177.81 745.1 1177.95 723.22 1178.08 745.1 1178.22 753.3 1178.36 739.62 1178.49 764.24 1178.63 723.22 1178.76 739.62 1178.9 747.83 1179.03 750.57 1179.17 753.3 1179.3 745.1 1179.44 745.1 1179.58 761.5 1179.71 736.89 1179.85 747.83 1179.98 756.03 1180.12 736.89 1180.25 739.62 1180.39 750.57 1180.52 750.57 1180.66 734.15 1180.8 750.57 1180.93 742.36 1181.07 731.42 1181.2 756.03 1181.34 758.77 1181.47 753.3 1181.61 750.57 1181.74 745.1 1181.88 736.89 1182.02 750.57 1182.15 728.68 1182.29 742.36 1182.42 764.24 1182.56 745.1 1182.69 739.62 1182.83 734.15 1182.96 753.3" fill="none" stroke="#0000ff" stroke-width="2.05" stroke-linejoin="round"/>
<rect x="911" y="689" width="274" height="120" fill="none" stroke="#000" stroke-width="1.8"/>
<line x1="912" y1="809" x2="912" y2="815.94" stroke="#000" stroke-width="1.8"/>
<text x="912" y="832" font-size="9.72" text-anchor="middle">0</text>
<line x1="980" y1="809" x2="980" y2="815.94" stroke="#000" stroke-width="1.8"/>
<text x="979.77" y="832" font-size="9.72" text-anchor="middle">500</text>
<line x1="1048" y1="809" x2="1048" y2="815.94" stroke="#000" stroke-width="1.8"/>
<text x="1047.55" y="832" font-size="9.72" text-anchor="middle">1000</text>
<line x1="1115" y1="809" x2="1115" y2="815.94" stroke="#000" stroke-width="1.8"/>
<text x="1115.33" y="832" font-size="9.72" text-anchor="middle">1500</text>
<line x1="1183" y1="809" x2="1183" y2="815.94" stroke="#000" stroke-width="1.8"/>
<text x="1183.1" y="832" font-size="9.72" text-anchor="middle">2000</text>
<line x1="911" y1="808" x2="904.06" y2="808" stroke="#000" stroke-width="1.8"/>
<text x="895.9" y="812" font-size="9.72" text-anchor="end">920</text>
<line x1="911" y1="781" x2="904.06" y2="781" stroke="#000" stroke-width="1.8"/>
<text x="895.9" y="785" font-size="9.72" text-anchor="end">930</text>
<line x1="911" y1="753" x2="904.06" y2="753" stroke="#000" stroke-width="1.8"/>
<text x="895.9" y="757" font-size="9.72" text-anchor="end">940</text>
<line x1="911" y1="726" x2="904.06" y2="726" stroke="#000" stroke-width="1.8"/>
<text x="895.9" y="730" font-size="9.72" text-anchor="end">950</text>
<line x1="911" y1="699" x2="904.06" y2="699" stroke="#000" stroke-width="1.8"/>
<text x="895.9" y="703" font-size="9.72" text-anchor="end">960</text>
<text x="1049" y="850" font-size="10.42" text-anchor="middle">Y</text>
<text x="866.1" y="750.9" font-size="10.42" text-anchor="middle" transform="rotate(-90 866.1 750.9)">counts</text>
<text x="1193.9" y="749.5" font-size="10.42" text-anchor="middle" transform="rotate(90 1193.9 749.5)">cut in y</text>
<rect x="1108.7" y="691.7" width="73.6" height="16.8" rx="2" ry="2" fill="#fff" fill-opacity="0.8" stroke="#ccc" stroke-opacity="0.8" stroke-width="1.1"/>
<line x1="1111.2" y1="699.9" x2="1133.8" y2="699.9" stroke="#0000ff" stroke-width="1.8"/>
<text x="1138.1" y="703.6" font-size="10.0" text-anchor="start">x=1053</text>
</svg>
</body></html>
